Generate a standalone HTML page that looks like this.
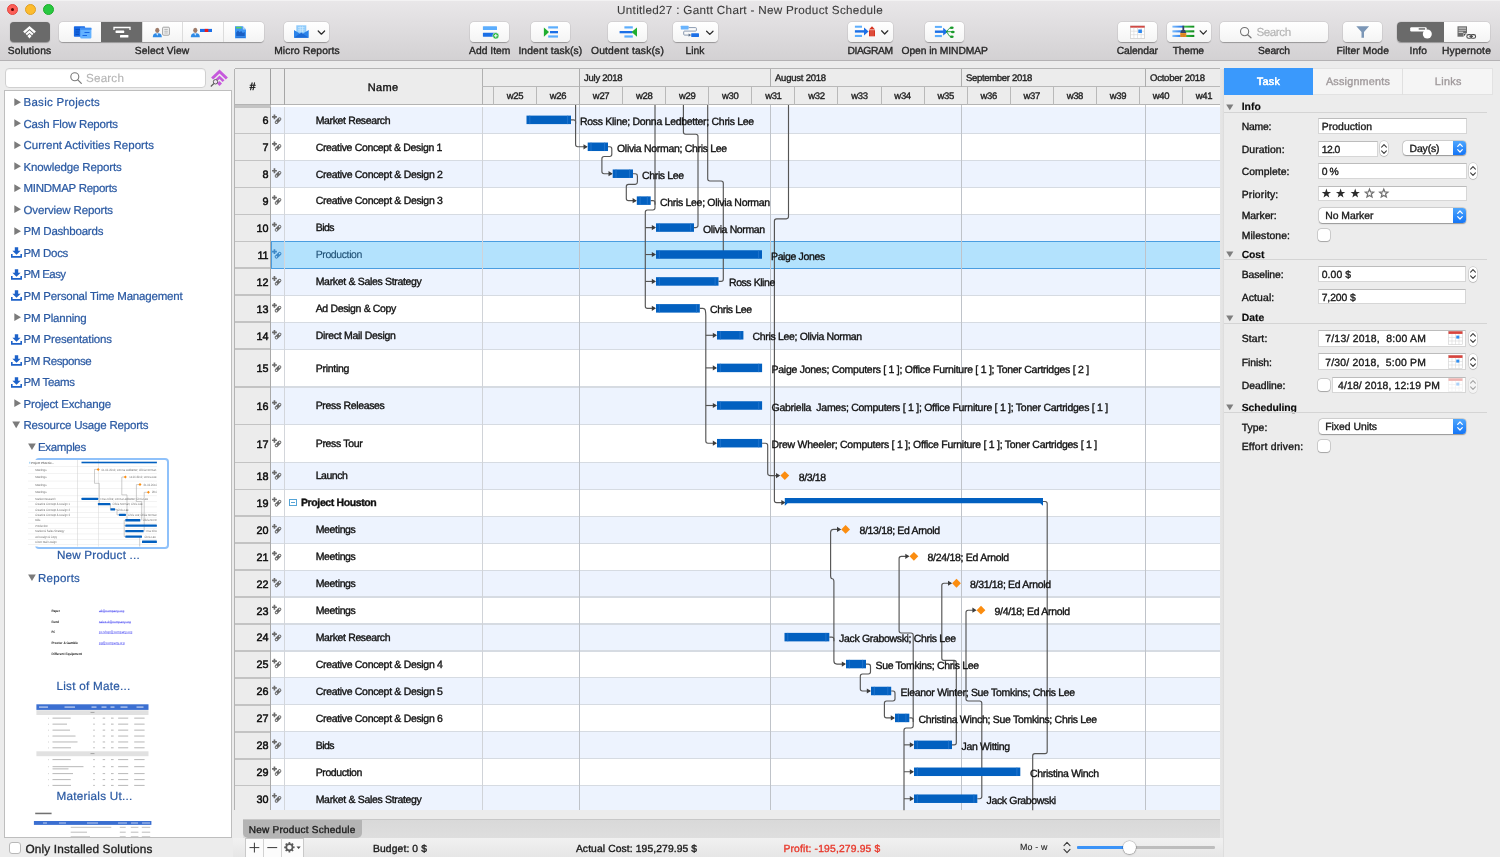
<!DOCTYPE html>
<html><head><meta charset="utf-8"><title>Gantt</title>
<style>
html,body{margin:0;padding:0;}
body{width:1500px;height:857px;overflow:hidden;position:relative;background:#ececec;font-family:"Liberation Sans",sans-serif;}
.t{position:absolute;white-space:pre;line-height:16px;}
.b{position:absolute;box-sizing:border-box;}
svg{position:absolute;overflow:visible;}
</style></head><body><div id="root" style="position:absolute;left:0;top:0;width:1500px;height:857px;will-change:transform;text-rendering:geometricPrecision;">
<div class="b" style="left:0.00px;top:0.00px;width:1500.00px;height:61.00px;background:linear-gradient(#e9e7e9,#d3d1d3);border-bottom:1px solid #b4b2b4;border-top:1px solid #f3f2f3;"></div>
<div class="b" style="left:6.90px;top:4.20px;width:11.20px;height:11.20px;border-radius:50%;background:#fd5f58;border:0.5px solid #e2463f;"></div>
<div class="b" style="left:24.80px;top:4.20px;width:11.20px;height:11.20px;border-radius:50%;background:#fdbc2e;border:0.5px solid #dfa023;"></div>
<div class="b" style="left:42.80px;top:4.20px;width:11.20px;height:11.20px;border-radius:50%;background:#28c840;border:0.5px solid #1dad2b;"></div>
<div class="b" style="left:10.90px;top:8.20px;width:3.20px;height:3.20px;border-radius:50%;background:#5a0503;"></div>
<div class="t" style="left:750.00px;width:0;display:flex;justify-content:center;top:3px;font-size:11.7px;color:#3c3c3c;letter-spacing:0.294px;-webkit-text-stroke:0.1px;"><span style="flex:none">Untitled27 : Gantt Chart - New Product Schedule</span></div>
<div class="b" style="left:9.70px;top:21.90px;width:39.90px;height:20.40px;border-radius:4px;background:#6a6a6a;box-shadow:0 0.5px 1px rgba(0,0,0,0.3);"></div>
<div class="t" style="left:29.50px;width:0;display:flex;justify-content:center;top:44px;font-size:10.3px;color:#262626;letter-spacing:0.133px;-webkit-text-stroke:0.35px;"><span style="flex:none">Solutions</span></div>
<div class="b" style="left:59.00px;top:22.20px;width:204.60px;height:19.80px;border-radius:4px;background:linear-gradient(#ffffff,#f4f4f4);box-shadow:0 0.5px 1px rgba(0,0,0,0.28),0 0 0 0.5px rgba(0,0,0,0.07);"></div>
<div class="b" style="left:101.00px;top:22.20px;width:41.00px;height:19.80px;background:#6a6a6a;"></div>
<div class="b" style="left:142.00px;top:22.20px;width:1.00px;height:19.80px;background:#dcdcdc;"></div>
<div class="b" style="left:182.30px;top:22.20px;width:1.00px;height:19.80px;background:#dcdcdc;"></div>
<div class="b" style="left:222.50px;top:22.20px;width:1.00px;height:19.80px;background:#dcdcdc;"></div>
<div class="t" style="left:162.00px;width:0;display:flex;justify-content:center;top:44px;font-size:10.3px;color:#262626;letter-spacing:0.074px;-webkit-text-stroke:0.35px;"><span style="flex:none">Select View</span></div>
<div class="b" style="left:284.40px;top:22.20px;width:44.60px;height:19.80px;border-radius:4px;background:linear-gradient(#ffffff,#f4f4f4);box-shadow:0 0.5px 1px rgba(0,0,0,0.28),0 0 0 0.5px rgba(0,0,0,0.07);"></div>
<div class="t" style="left:307.00px;width:0;display:flex;justify-content:center;top:44px;font-size:10.3px;color:#262626;letter-spacing:0.120px;-webkit-text-stroke:0.35px;"><span style="flex:none">Micro Reports</span></div>
<div class="b" style="left:470.00px;top:22.20px;width:39.00px;height:19.80px;border-radius:4px;background:linear-gradient(#ffffff,#f4f4f4);box-shadow:0 0.5px 1px rgba(0,0,0,0.28),0 0 0 0.5px rgba(0,0,0,0.07);"></div>
<div class="t" style="left:489.70px;width:0;display:flex;justify-content:center;top:44px;font-size:10.3px;color:#262626;letter-spacing:0.024px;-webkit-text-stroke:0.35px;"><span style="flex:none">Add Item</span></div>
<div class="b" style="left:531.00px;top:22.20px;width:39.40px;height:19.80px;border-radius:4px;background:linear-gradient(#ffffff,#f4f4f4);box-shadow:0 0.5px 1px rgba(0,0,0,0.28),0 0 0 0.5px rgba(0,0,0,0.07);"></div>
<div class="t" style="left:550.40px;width:0;display:flex;justify-content:center;top:44px;font-size:10.3px;color:#262626;letter-spacing:0.119px;-webkit-text-stroke:0.35px;"><span style="flex:none">Indent task(s)</span></div>
<div class="b" style="left:608.00px;top:22.20px;width:39.40px;height:19.80px;border-radius:4px;background:linear-gradient(#ffffff,#f4f4f4);box-shadow:0 0.5px 1px rgba(0,0,0,0.28),0 0 0 0.5px rgba(0,0,0,0.07);"></div>
<div class="t" style="left:627.50px;width:0;display:flex;justify-content:center;top:44px;font-size:10.3px;color:#262626;letter-spacing:0.179px;-webkit-text-stroke:0.35px;"><span style="flex:none">Outdent task(s)</span></div>
<div class="b" style="left:673.00px;top:22.20px;width:44.60px;height:19.80px;border-radius:4px;background:linear-gradient(#ffffff,#f4f4f4);box-shadow:0 0.5px 1px rgba(0,0,0,0.28),0 0 0 0.5px rgba(0,0,0,0.07);"></div>
<div class="t" style="left:695.00px;width:0;display:flex;justify-content:center;top:44px;font-size:10.3px;color:#262626;letter-spacing:-0.027px;-webkit-text-stroke:0.35px;"><span style="flex:none">Link</span></div>
<div class="b" style="left:847.90px;top:22.20px;width:44.80px;height:19.80px;border-radius:4px;background:linear-gradient(#ffffff,#f4f4f4);box-shadow:0 0.5px 1px rgba(0,0,0,0.28),0 0 0 0.5px rgba(0,0,0,0.07);"></div>
<div class="t" style="left:870.00px;width:0;display:flex;justify-content:center;top:44px;font-size:10.3px;color:#262626;letter-spacing:-0.411px;-webkit-text-stroke:0.35px;"><span style="flex:none">DIAGRAM</span></div>
<div class="b" style="left:925.20px;top:22.20px;width:38.90px;height:19.80px;border-radius:4px;background:linear-gradient(#ffffff,#f4f4f4);box-shadow:0 0.5px 1px rgba(0,0,0,0.28),0 0 0 0.5px rgba(0,0,0,0.07);"></div>
<div class="t" style="left:944.70px;width:0;display:flex;justify-content:center;top:44px;font-size:10.3px;color:#262626;letter-spacing:-0.081px;-webkit-text-stroke:0.35px;"><span style="flex:none">Open in MINDMAP</span></div>
<div class="b" style="left:1118.00px;top:22.20px;width:39.20px;height:19.80px;border-radius:4px;background:linear-gradient(#ffffff,#f4f4f4);box-shadow:0 0.5px 1px rgba(0,0,0,0.28),0 0 0 0.5px rgba(0,0,0,0.07);"></div>
<div class="t" style="left:1137.30px;width:0;display:flex;justify-content:center;top:44px;font-size:10.3px;color:#262626;letter-spacing:-0.067px;-webkit-text-stroke:0.35px;"><span style="flex:none">Calendar</span></div>
<div class="b" style="left:1166.50px;top:22.20px;width:44.30px;height:19.80px;border-radius:4px;background:linear-gradient(#ffffff,#f4f4f4);box-shadow:0 0.5px 1px rgba(0,0,0,0.28),0 0 0 0.5px rgba(0,0,0,0.07);"></div>
<div class="t" style="left:1188.30px;width:0;display:flex;justify-content:center;top:44px;font-size:10.3px;color:#262626;letter-spacing:-0.168px;-webkit-text-stroke:0.35px;"><span style="flex:none">Theme</span></div>
<div class="b" style="left:1220.00px;top:22.20px;width:107.60px;height:19.80px;border-radius:4px;background:linear-gradient(#ffffff,#f4f4f4);box-shadow:0 0.5px 1px rgba(0,0,0,0.28),0 0 0 0.5px rgba(0,0,0,0.07);"></div>
<div class="t" style="left:1274.00px;width:0;display:flex;justify-content:center;top:44px;font-size:10.3px;color:#262626;letter-spacing:-0.116px;-webkit-text-stroke:0.35px;"><span style="flex:none">Search</span></div>
<div class="t" style="left:1256.40px;top:25px;font-size:11.7px;color:#b3b3b3;letter-spacing:-0.449px;-webkit-text-stroke:0.15px;">Search</div>
<div class="b" style="left:1343.00px;top:22.20px;width:39.40px;height:19.80px;border-radius:4px;background:linear-gradient(#ffffff,#f4f4f4);box-shadow:0 0.5px 1px rgba(0,0,0,0.28),0 0 0 0.5px rgba(0,0,0,0.07);"></div>
<div class="t" style="left:1362.70px;width:0;display:flex;justify-content:center;top:44px;font-size:10.3px;color:#262626;letter-spacing:0.103px;-webkit-text-stroke:0.35px;"><span style="flex:none">Filter Mode</span></div>
<div class="b" style="left:1397.00px;top:22.20px;width:93.00px;height:19.80px;border-radius:4px;background:linear-gradient(#ffffff,#f4f4f4);box-shadow:0 0.5px 1px rgba(0,0,0,0.28),0 0 0 0.5px rgba(0,0,0,0.07);"></div>
<div class="b" style="left:1397.00px;top:22.20px;width:47.00px;height:19.80px;border-radius:4px 0 0 4px;background:#6a6a6a;"></div>
<div class="t" style="left:1418.30px;width:0;display:flex;justify-content:center;top:44px;font-size:10.3px;color:#262626;letter-spacing:0.063px;-webkit-text-stroke:0.35px;"><span style="flex:none">Info</span></div>
<div class="t" style="left:1466.50px;width:0;display:flex;justify-content:center;top:44px;font-size:10.3px;color:#262626;letter-spacing:0.174px;-webkit-text-stroke:0.35px;"><span style="flex:none">Hypernote</span></div>
<svg style="left:0;top:0" width="1500" height="62" viewBox="0 0 1500 62"><g fill="#fff"><path d="M29.5 26 L35.9 31.6 L34.2 33.2 L29.5 29.1 L24.8 33.2 L23.1 31.6 Z"/><path d="M29.5 30.2 L33.5 33.8 L32.1 35.2 L29.5 32.9 L26.9 35.2 L25.5 33.8 Z"/><path d="M29.5 34 L31.6 36.1 L29.5 38.4 L27.4 36.1 Z"/></g><rect x="73.9" y="26.2" width="11.2" height="10.5" rx="0.8" fill="#1667e3"/><path d="M75.5 29.6 H80 M75.5 32 H79 M75.5 34.4 H79" stroke="#0b4fc0" stroke-width="1.1"/><rect x="80.2" y="27.8" width="11.2" height="10.6" rx="0.8" fill="#62b1ff"/><rect x="80.2" y="27.8" width="11.2" height="2" fill="#3f8df2"/><path d="M84.5 32.5 H89.5 M82.5 35.5 H87" stroke="#1667e3" stroke-width="1.2"/><path d="M114 30 V27.5 H130 V30" fill="none" stroke="#fff" stroke-width="1.3"/><rect x="115.6" y="30.6" width="8.6" height="2.5" rx="0.6" fill="#fff"/><rect x="120" y="34.9" width="8.4" height="2.7" rx="0.6" fill="#fff"/><ellipse cx="157.3" cy="30.3" rx="2.1" ry="2.6" fill="#9d7b6a"/><path d="M152.8 37.3 C152.8 33.6 155.3 33 157.3 33 C159.3 33 161.8 33.6 161.8 37.3 Z" fill="#2e8ae6"/><path d="M156.0 33.2 L157.3 35.8 L158.6 33.2 Z" fill="#d7e9fb"/><rect x="162.6" y="27.2" width="6.8" height="8" rx="1" fill="#f3f3f3" stroke="#8d8d8d" stroke-width="0.8"/><path d="M164.3 29.4 H167.8 M164.3 31.2 H167.8 M164.3 33 H167.8" stroke="#9a9a9a" stroke-width="0.7"/><ellipse cx="195.3" cy="30.3" rx="2.1" ry="2.6" fill="#9d7b6a"/><path d="M190.8 37.3 C190.8 33.6 193.3 33 195.3 33 C197.3 33 199.8 33.6 199.8 37.3 Z" fill="#2e8ae6"/><path d="M194.0 33.2 L195.3 35.8 L196.6 33.2 Z" fill="#d7e9fb"/><rect x="200" y="28.9" width="12" height="3.1" fill="#1b6fe8"/><rect x="204.7" y="28.9" width="3.6" height="3.1" fill="#f01818"/><path d="M235 26.3 H242.8 L246 29.5 V38.3 H235 Z" fill="#3d95f5"/><path d="M242.8 26.3 V29.5 H246 Z" fill="#a9d2fb"/><rect x="236" y="26.8" width="5.6" height="1.7" fill="#5fd05a"/><path d="M236.2 36 V32.5 L238 30.5 L239.5 32.2 L241.2 31 L242.8 33 L244.8 32 V36 Z" fill="#1a5fc4"/><path d="M236 37.2 H245" stroke="#1a5fc4" stroke-width="0.7"/><rect x="296.3" y="25.3" width="10" height="8" fill="#8fcbfb"/><path d="M298 27.5 H304.6 M298 29.3 H304.6 M298 31 H304.6 M300.2 26.3 V32 M302.5 26.3 V32" stroke="#d4ecfd" stroke-width="0.6"/><path d="M294 30 L301.3 34.6 L308.7 30 V37.7 H294 Z" fill="#2a83ea"/><path d="M294 37.7 L301.3 32.6 L308.7 37.7 Z" fill="#1b6ad6"/><path d="M318.2 31.0 L321.4 34.2 L324.6 31.0" fill="none" stroke="#2c2c2c" stroke-width="1.25" stroke-linecap="round" stroke-linejoin="round"/><rect x="482.9" y="26.3" width="14.1" height="3.8" rx="0.4" fill="#5badfd"/><rect x="482.9" y="32.7" width="14.1" height="4" rx="0.4" fill="#1b6fe6"/><circle cx="495.8" cy="35.8" r="3.1" fill="#25b43a" stroke="#fff" stroke-width="0.5"/><path d="M494 35.8 H497.6 M495.8 34 V37.6" stroke="#fff" stroke-width="1"/><path d="M543.9 27.4 L549 32.1 L543.9 36.8 Z" fill="#1fae2f"/><rect x="548.2" y="26.3" width="9.8" height="2.2" fill="#5badfd"/><rect x="550" y="31" width="8" height="2.3" fill="#1b6fe6"/><rect x="548.2" y="35.4" width="9.8" height="2.2" fill="#5badfd"/><rect x="624.4" y="26.3" width="8.4" height="2.2" fill="#5badfd"/><rect x="619.6" y="31" width="13" height="2.3" fill="#1b6fe6"/><rect x="624.4" y="35.4" width="8.4" height="2.2" fill="#5badfd"/><path d="M637 27.4 L631.6 32.1 L637 36.8 Z" fill="#1fae2f"/><rect x="680.8" y="25.8" width="7.8" height="3.6" rx="0.4" fill="#6ab4fd"/><rect x="691.2" y="33.3" width="7.8" height="3.6" rx="0.4" fill="#1b6fe6"/><path d="M688.6 27.6 H695.5 Q696.4 27.6 696.4 28.5 V30.2 Q696.4 31.1 695.5 31.1 H684.6 Q683.7 31.1 683.7 32 V34.2 Q683.7 35.1 684.6 35.1 H689" fill="none" stroke="#7e8fa8" stroke-width="0.9"/><path d="M691.2 35.1 L688.6 33.5 V36.7 Z" fill="#5f7088"/><path d="M706.6 31.2 L709.8 34.4 L713.0 31.2" fill="none" stroke="#2c2c2c" stroke-width="1.25" stroke-linecap="round" stroke-linejoin="round"/><rect x="854.9" y="25.7" width="7.1" height="2" fill="#5badfd"/><rect x="854.9" y="34.9" width="7.1" height="2.1" fill="#5badfd"/><rect x="854.9" y="30.2" width="9.8" height="2.4" fill="#1b6fe6"/><path d="M864 27.4 L868.6 31.4 L864 35.4 Z" fill="#1b6fe6"/><path d="M872 26.3 L875 29.6 H869 Z" fill="#d6321f"/><rect x="869" y="30.2" width="6" height="6.1" fill="#d6321f"/><path d="M871 30.5 V36 M873 30.5 V36" stroke="#f08a7c" stroke-width="0.6"/><path d="M881.6 30.8 L884.7 34.0 L887.8 30.8" fill="none" stroke="#2c2c2c" stroke-width="1.25" stroke-linecap="round" stroke-linejoin="round"/><rect x="934.9" y="25.9" width="7" height="2" fill="#5badfd"/><rect x="934.9" y="35" width="7" height="2.1" fill="#5badfd"/><rect x="934.9" y="30.5" width="9" height="2.4" fill="#1b6fe6"/><path d="M943.2 27.8 L947.9 31.7 L943.2 35.6 Z" fill="#1b6fe6"/><path d="M946 31.7 C948 31.7 948 27.8 951 27.8 M946 31.7 H952 M946 31.7 C948 31.7 948 36.6 951 36.6" fill="none" stroke="#1a9a2c" stroke-width="0.9"/><ellipse cx="951.8" cy="27.7" rx="1.9" ry="1.2" fill="#1a9a2c"/><ellipse cx="952.8" cy="32" rx="1.9" ry="1.3" fill="#1a9a2c"/><ellipse cx="951.8" cy="36.7" rx="1.9" ry="1.2" fill="#1a9a2c"/><rect x="1130.3" y="26" width="14.4" height="12.3" fill="#fff" stroke="#c4c4c4" stroke-width="0.6"/><rect x="1130.3" y="25.8" width="14.4" height="1.9" fill="#d04a45"/><path d="M1133.9 27.7 V38.3 M1137.5 27.7 V38.3 M1141.1 27.7 V38.3 M1130.3 31.2 H1144.7 M1130.3 34.7 H1144.7" stroke="#d5d5d5" stroke-width="0.6"/><rect x="1138.3" y="29.5" width="3.6" height="3.5" fill="#2a86ee"/><rect x="1172.4" y="25.7" width="11" height="1.9" fill="url(#gb)"/><rect x="1183.4" y="25.7" width="10.9" height="1.9" fill="url(#gg)"/><rect x="1172.4" y="30.3" width="11" height="2.1" fill="url(#gb)"/><rect x="1183.4" y="30.3" width="10.9" height="2.1" fill="url(#gg)"/><rect x="1172.4" y="34.9" width="11" height="2.1" fill="url(#gb)"/><rect x="1183.4" y="34.9" width="10.9" height="2.1" fill="url(#gg)"/><defs><linearGradient id="gb"><stop offset="0" stop-color="#7cbcfd"/><stop offset="1" stop-color="#1b6fe6"/></linearGradient><linearGradient id="gg"><stop offset="0" stop-color="#3fc84a"/><stop offset="1" stop-color="#108a1e"/></linearGradient></defs><rect x="1182.4" y="25.7" width="1.8" height="4.4" fill="#35466a"/><path d="M1181.6 30 H1185 L1186.3 33 H1180.2 Z" fill="#35466a"/><rect x="1180.2" y="33" width="6.1" height="4" fill="#e8922a"/><path d="M1181.8 34 V37 M1183.3 34 V37 M1184.8 34 V37" stroke="#c27012" stroke-width="0.5"/><path d="M1200.2 30.8 L1203.3 34.2 L1206.4 30.8" fill="none" stroke="#2c2c2c" stroke-width="1.25" stroke-linecap="round" stroke-linejoin="round"/><circle cx="1244.6" cy="31.6" r="4.1" fill="none" stroke="#747474" stroke-width="1.1"/><path d="M1247.7 34.7 L1251 37.8" stroke="#747474" stroke-width="1.2" stroke-linecap="round"/><path d="M1356.3 26.3 H1369.1 L1364 32 V37.7 H1361.5 V32 Z" fill="#7b96b6"/><rect x="1410.2" y="27.2" width="16.5" height="4.3" rx="1.2" fill="#fff"/><rect x="1418.7" y="28.3" width="6.4" height="1.3" fill="#555"/><circle cx="1427.3" cy="34" r="4.5" fill="#fff"/><rect x="1457.5" y="26.3" width="9.5" height="10.4" fill="#6b6b6b"/><path d="M1458.6 28.1 H1466 M1458.6 30.2 H1466 M1458.6 32.3 H1463.2" stroke="#c9c9c9" stroke-width="1.15"/><rect x="1463.6" y="33" width="4.4" height="4.6" fill="#f6f6f6"/><path d="M1464.5 35.6 V33.9 H1466.4" fill="none" stroke="#4a4a4a" stroke-width="1"/><rect x="1466.8" y="34.6" width="4.8" height="3.6" rx="1.8" fill="none" stroke="#4a4a4a" stroke-width="1.05"/><rect x="1470.8" y="34.6" width="4.8" height="3.6" rx="1.8" fill="none" stroke="#4a4a4a" stroke-width="1.05"/><path d="M1469.4 36.4 H1473" stroke="#4a4a4a" stroke-width="1.05"/></svg>
<div class="b" style="left:5.10px;top:68.10px;width:200.60px;height:19.60px;background:#fff;border:1px solid #d0d0d0;border-radius:4px;box-shadow:inset 0 1px 1px rgba(0,0,0,0.05);"></div>
<svg style="left:69px;top:71px" width="14" height="14" viewBox="0 0 14 14"><circle cx="5.8" cy="5.8" r="4" fill="none" stroke="#7a7a7a" stroke-width="1.1"/><path d="M8.8 8.8 L12.3 12.3" stroke="#7a7a7a" stroke-width="1.2" stroke-linecap="round"/></svg>
<div class="t" style="left:86.00px;top:71px;font-size:11.7px;color:#b5b5b5;letter-spacing:0.169px;-webkit-text-stroke:0.15px;">Search</div>
<svg style="left:0;top:0" width="240" height="100"><g transform="translate(219.5 69.6)" fill="#c659dc"><path d="M0 0 L8.4 7.9 L6.3 9.9 L0 4 L-6.3 9.9 L-8.4 7.9 Z"/><path d="M0 5.8 L5 10.6 L3.1 12.5 L0 9.5 L-3.1 12.5 L-5 10.6 Z"/><path d="M0 11.4 L2.5 13.8 L0 16.3 L-2.5 13.8 Z"/></g><circle cx="215.5" cy="81.8" r="2.2" fill="#efe3f3" stroke="#585858" stroke-width="0.95"/><path d="M213.9 83.5 L210.8 86.5" stroke="#585858" stroke-width="1.1"/></svg>
<div class="b" style="left:4.00px;top:89.60px;width:228.40px;height:748.00px;background:#fff;border:1.6px solid #bebebe;border-bottom-width:1px;border-right-width:1.2px;"></div>
<div class="t" style="left:23.50px;top:95px;font-size:11.5px;color:#2b5aa3;letter-spacing:0.270px;-webkit-text-stroke:0.22px;">Basic Projects</div>
<svg style="left:13.6px;top:97.60px" width="8" height="9" viewBox="0 0 8 9"><path d="M0.3 0.3 L7 4.2 L0.3 8.1 Z" fill="#7b7b7b"/></svg>
<div class="t" style="left:23.50px;top:117px;font-size:11.5px;color:#2b5aa3;letter-spacing:-0.199px;-webkit-text-stroke:0.22px;">Cash Flow Reports</div>
<svg style="left:13.6px;top:119.12px" width="8" height="9" viewBox="0 0 8 9"><path d="M0.3 0.3 L7 4.2 L0.3 8.1 Z" fill="#7b7b7b"/></svg>
<div class="t" style="left:23.50px;top:138px;font-size:11.5px;color:#2b5aa3;letter-spacing:0.026px;-webkit-text-stroke:0.22px;">Current Activities Reports</div>
<svg style="left:13.6px;top:140.64px" width="8" height="9" viewBox="0 0 8 9"><path d="M0.3 0.3 L7 4.2 L0.3 8.1 Z" fill="#7b7b7b"/></svg>
<div class="t" style="left:23.50px;top:160px;font-size:11.5px;color:#2b5aa3;letter-spacing:-0.125px;-webkit-text-stroke:0.22px;">Knowledge Reports</div>
<svg style="left:13.6px;top:162.16px" width="8" height="9" viewBox="0 0 8 9"><path d="M0.3 0.3 L7 4.2 L0.3 8.1 Z" fill="#7b7b7b"/></svg>
<div class="t" style="left:23.50px;top:181px;font-size:11.5px;color:#2b5aa3;letter-spacing:-0.266px;-webkit-text-stroke:0.22px;">MINDMAP Reports</div>
<svg style="left:13.6px;top:183.68px" width="8" height="9" viewBox="0 0 8 9"><path d="M0.3 0.3 L7 4.2 L0.3 8.1 Z" fill="#7b7b7b"/></svg>
<div class="t" style="left:23.50px;top:203px;font-size:11.5px;color:#2b5aa3;letter-spacing:-0.122px;-webkit-text-stroke:0.22px;">Overview Reports</div>
<svg style="left:13.6px;top:205.20px" width="8" height="9" viewBox="0 0 8 9"><path d="M0.3 0.3 L7 4.2 L0.3 8.1 Z" fill="#7b7b7b"/></svg>
<div class="t" style="left:23.50px;top:224px;font-size:11.5px;color:#2b5aa3;letter-spacing:-0.212px;-webkit-text-stroke:0.22px;">PM Dashboards</div>
<svg style="left:13.6px;top:226.72px" width="8" height="9" viewBox="0 0 8 9"><path d="M0.3 0.3 L7 4.2 L0.3 8.1 Z" fill="#7b7b7b"/></svg>
<div class="t" style="left:23.50px;top:246px;font-size:11.5px;color:#2b5aa3;letter-spacing:-0.299px;-webkit-text-stroke:0.22px;">PM Docs</div>
<svg style="left:10.5px;top:247.44px" width="11" height="11" viewBox="0 0 11 11"><path d="M3.8 0.3 H7.2 V3.8 H9.6 L5.5 7.7 L1.4 3.8 H3.8 Z" fill="#1d62c9"/><path d="M0.8 6.9 V9.9 H10.2 V6.9" fill="none" stroke="#1d62c9" stroke-width="1.6"/></svg>
<div class="t" style="left:23.50px;top:267px;font-size:11.5px;color:#2b5aa3;letter-spacing:-0.571px;-webkit-text-stroke:0.22px;">PM Easy</div>
<svg style="left:10.5px;top:268.96px" width="11" height="11" viewBox="0 0 11 11"><path d="M3.8 0.3 H7.2 V3.8 H9.6 L5.5 7.7 L1.4 3.8 H3.8 Z" fill="#1d62c9"/><path d="M0.8 6.9 V9.9 H10.2 V6.9" fill="none" stroke="#1d62c9" stroke-width="1.6"/></svg>
<div class="t" style="left:23.50px;top:289px;font-size:11.5px;color:#2b5aa3;letter-spacing:-0.199px;-webkit-text-stroke:0.22px;">PM Personal Time Management</div>
<svg style="left:10.5px;top:290.48px" width="11" height="11" viewBox="0 0 11 11"><path d="M3.8 0.3 H7.2 V3.8 H9.6 L5.5 7.7 L1.4 3.8 H3.8 Z" fill="#1d62c9"/><path d="M0.8 6.9 V9.9 H10.2 V6.9" fill="none" stroke="#1d62c9" stroke-width="1.6"/></svg>
<div class="t" style="left:23.50px;top:311px;font-size:11.5px;color:#2b5aa3;letter-spacing:-0.210px;-webkit-text-stroke:0.22px;">PM Planning</div>
<svg style="left:13.6px;top:312.80px" width="8" height="9" viewBox="0 0 8 9"><path d="M0.3 0.3 L7 4.2 L0.3 8.1 Z" fill="#7b7b7b"/></svg>
<div class="t" style="left:23.50px;top:332px;font-size:11.5px;color:#2b5aa3;letter-spacing:-0.146px;-webkit-text-stroke:0.22px;">PM Presentations</div>
<svg style="left:10.5px;top:333.52px" width="11" height="11" viewBox="0 0 11 11"><path d="M3.8 0.3 H7.2 V3.8 H9.6 L5.5 7.7 L1.4 3.8 H3.8 Z" fill="#1d62c9"/><path d="M0.8 6.9 V9.9 H10.2 V6.9" fill="none" stroke="#1d62c9" stroke-width="1.6"/></svg>
<div class="t" style="left:23.50px;top:354px;font-size:11.5px;color:#2b5aa3;letter-spacing:-0.403px;-webkit-text-stroke:0.22px;">PM Response</div>
<svg style="left:10.5px;top:355.04px" width="11" height="11" viewBox="0 0 11 11"><path d="M3.8 0.3 H7.2 V3.8 H9.6 L5.5 7.7 L1.4 3.8 H3.8 Z" fill="#1d62c9"/><path d="M0.8 6.9 V9.9 H10.2 V6.9" fill="none" stroke="#1d62c9" stroke-width="1.6"/></svg>
<div class="t" style="left:23.50px;top:375px;font-size:11.5px;color:#2b5aa3;letter-spacing:-0.388px;-webkit-text-stroke:0.22px;">PM Teams</div>
<svg style="left:10.5px;top:376.56px" width="11" height="11" viewBox="0 0 11 11"><path d="M3.8 0.3 H7.2 V3.8 H9.6 L5.5 7.7 L1.4 3.8 H3.8 Z" fill="#1d62c9"/><path d="M0.8 6.9 V9.9 H10.2 V6.9" fill="none" stroke="#1d62c9" stroke-width="1.6"/></svg>
<div class="t" style="left:23.50px;top:397px;font-size:11.5px;color:#2b5aa3;letter-spacing:-0.164px;-webkit-text-stroke:0.22px;">Project Exchange</div>
<svg style="left:13.6px;top:398.88px" width="8" height="9" viewBox="0 0 8 9"><path d="M0.3 0.3 L7 4.2 L0.3 8.1 Z" fill="#7b7b7b"/></svg>
<div class="t" style="left:23.50px;top:418px;font-size:11.5px;color:#2b5aa3;letter-spacing:-0.191px;-webkit-text-stroke:0.22px;">Resource Usage Reports</div>
<svg style="left:12.4px;top:421.40px" width="9" height="8" viewBox="0 0 9 8"><path d="M0.3 0.6 L8.1 0.6 L4.2 7.3 Z" fill="#7b7b7b"/></svg>
<svg style="left:27.5px;top:443px" width="9" height="8" viewBox="0 0 9 8"><path d="M0.1 0.4 L7.8 0.4 L3.95 7 Z" fill="#7b7b7b"/></svg>
<div class="t" style="left:38.00px;top:440px;font-size:11.5px;color:#2b5aa3;letter-spacing:-0.332px;-webkit-text-stroke:0.22px;">Examples</div>
<div class="b" style="left:35.00px;top:457.80px;width:134.20px;height:91.20px;border:2px solid #8fc1fa;border-radius:4px;background:#fff;"></div>
<div class="t" style="left:98.40px;width:0;display:flex;justify-content:center;top:548px;font-size:11.7px;color:#2b5aa3;letter-spacing:0.208px;-webkit-text-stroke:0.22px;"><span style="flex:none">New Product ...</span></div>
<svg style="left:27.5px;top:574.3px" width="9" height="8" viewBox="0 0 9 8"><path d="M0.1 0.4 L7.8 0.4 L3.95 7 Z" fill="#7b7b7b"/></svg>
<div class="t" style="left:38.00px;top:571px;font-size:11.5px;color:#2b5aa3;letter-spacing:0.267px;-webkit-text-stroke:0.22px;">Reports</div>
<div class="t" style="left:93.50px;width:0;display:flex;justify-content:center;top:679px;font-size:11.7px;color:#2b5aa3;letter-spacing:0.260px;-webkit-text-stroke:0.22px;"><span style="flex:none">List of Mate...</span></div>
<div class="t" style="left:94.50px;width:0;display:flex;justify-content:center;top:789px;font-size:11.7px;color:#2b5aa3;letter-spacing:0.264px;-webkit-text-stroke:0.22px;"><span style="flex:none">Materials Ut...</span></div>
<svg style="left:0;top:0" width="240" height="857" viewBox="0 0 240 857" font-family="Liberation Sans, sans-serif"><defs><filter id="bl" x="-5%" y="-50%" width="110%" height="200%"><feGaussianBlur stdDeviation="0.35"/></filter><clipPath id="sbclip"><rect x="5.7" y="91" width="225.6" height="746"/></clipPath></defs><g clip-path="url(#sbclip)"><rect x="28" y="460" width="128.9" height="86.5" fill="#fff"/><rect x="28" y="466.0" width="128.9" height="0.5" fill="#e6e6e6"/><rect x="28" y="473.2" width="128.9" height="0.5" fill="#e6e6e6"/><rect x="28" y="480.8" width="128.9" height="0.5" fill="#e6e6e6"/><rect x="28" y="488.4" width="128.9" height="0.5" fill="#e6e6e6"/><rect x="28" y="495.6" width="128.9" height="0.5" fill="#e6e6e6"/><rect x="28" y="501.4" width="128.9" height="0.5" fill="#e6e6e6"/><rect x="28" y="506.7" width="128.9" height="0.5" fill="#e6e6e6"/><rect x="28" y="512.1" width="128.9" height="0.5" fill="#e6e6e6"/><rect x="28" y="517.5" width="128.9" height="0.5" fill="#e6e6e6"/><rect x="28" y="522.9" width="128.9" height="0.5" fill="#e6e6e6"/><rect x="28" y="528.3" width="128.9" height="0.5" fill="#e6e6e6"/><rect x="28" y="533.7" width="128.9" height="0.5" fill="#e6e6e6"/><rect x="28" y="539.1" width="128.9" height="0.5" fill="#e6e6e6"/><rect x="28" y="544.5" width="128.9" height="0.5" fill="#e6e6e6"/><rect x="77.2" y="460" width="0.5" height="86.5" fill="#cfcfcf"/><rect x="98" y="460" width="0.5" height="86.5" fill="#d6d6d6"/><g fill="none" stroke="#9a9a9a" stroke-width="0.5"><path d="M97 469.4 H94.5 V483.3 H99.3 V504 "/><path d="M124 477 H121.8 V494.9 H127 V520.4"/><path d="M139 484.6 H136.4 V501.6 H141.7 V520.4"/><path d="M147 492.3 H144.2 V531.5"/><path d="M125.3 520.4 H124.2 V536.5 H125.3 M124.2 525.6 H125.3 M124.2 531 H125.3"/><path d="M142 536.5 H139.7 V546.5"/><path d="M110.4 504 V509.4 M115.1 509.4 H117 V514.9 H118.9"/></g><text x="31.1" y="463.9" font-size="3.1" textLength="22.7" lengthAdjust="spacingAndGlyphs" fill="#333" opacity="0.7" font-weight="bold">Project Phoenix...</text><text x="35.2" y="470.5" font-size="3.1" textLength="11.4" lengthAdjust="spacingAndGlyphs" fill="#333" opacity="0.7" >Meetings</text><text x="35.2" y="478.1" font-size="3.1" textLength="11.4" lengthAdjust="spacingAndGlyphs" fill="#333" opacity="0.7" >Meetings</text><text x="35.2" y="485.7" font-size="3.1" textLength="11.4" lengthAdjust="spacingAndGlyphs" fill="#333" opacity="0.7" >Meetings</text><text x="35.2" y="493.4" font-size="3.1" textLength="11.4" lengthAdjust="spacingAndGlyphs" fill="#333" opacity="0.7" >Meetings</text><text x="35.2" y="499.9" font-size="3.1" textLength="20.5" lengthAdjust="spacingAndGlyphs" fill="#333" opacity="0.7" >Market Research</text><text x="35.2" y="505.1" font-size="3.1" textLength="34.7" lengthAdjust="spacingAndGlyphs" fill="#333" opacity="0.7" >Creative Concept &amp; Design 1</text><text x="35.2" y="510.5" font-size="3.1" textLength="34.7" lengthAdjust="spacingAndGlyphs" fill="#333" opacity="0.7" >Creative Concept &amp; Design 2</text><text x="35.2" y="516.0" font-size="3.1" textLength="34.7" lengthAdjust="spacingAndGlyphs" fill="#333" opacity="0.7" >Creative Concept &amp; Design 3</text><text x="35.2" y="521.3" font-size="3.1" textLength="5.3" lengthAdjust="spacingAndGlyphs" fill="#333" opacity="0.7" >Bids</text><text x="35.2" y="526.7" font-size="3.1" textLength="12.8" lengthAdjust="spacingAndGlyphs" fill="#333" opacity="0.7" >Production</text><text x="35.2" y="532.1" font-size="3.1" textLength="29.1" lengthAdjust="spacingAndGlyphs" fill="#333" opacity="0.7" >Market &amp; Sales Strategy</text><text x="35.2" y="537.6" font-size="3.1" textLength="21.9" lengthAdjust="spacingAndGlyphs" fill="#333" opacity="0.7" >Ad Design &amp; Copy</text><text x="35.2" y="542.9" font-size="3.1" textLength="21.6" lengthAdjust="spacingAndGlyphs" fill="#333" opacity="0.7" >Direct Mail Design</text><text x="101.5" y="470.5" font-size="3.1" textLength="54.9" lengthAdjust="spacingAndGlyphs" fill="#333" opacity="0.7" >01.06.2016; Donna Ledbetter; Olivia Norman</text><text x="129.2" y="478.1" font-size="3.1" textLength="27.2" lengthAdjust="spacingAndGlyphs" fill="#333" opacity="0.7" >14.06.2016; Donna Lee</text><text x="143.6" y="485.7" font-size="3.1" textLength="13.3" lengthAdjust="spacingAndGlyphs" fill="#333" opacity="0.7" >21.06.2016</text><text x="151.9" y="493.4" font-size="3.1" textLength="5.0" lengthAdjust="spacingAndGlyphs" fill="#333" opacity="0.7" >28.0</text><text x="100.4" y="499.9" font-size="3.1" textLength="47.6" lengthAdjust="spacingAndGlyphs" fill="#333" opacity="0.7" >Ross Kline; Donna Ledbetter; Chris Lee</text><text x="112.6" y="505.1" font-size="3.1" textLength="29.9" lengthAdjust="spacingAndGlyphs" fill="#333" opacity="0.7" >Olivia Norman; Chris Lee</text><text x="117.3" y="510.5" font-size="3.1" textLength="11.3" lengthAdjust="spacingAndGlyphs" fill="#333" opacity="0.7" >Chris Lee</text><text x="128.1" y="516.0" font-size="3.1" textLength="28.8" lengthAdjust="spacingAndGlyphs" fill="#333" opacity="0.7" >Chris Lee; Olivia Norman</text><text x="142.8" y="521.3" font-size="3.1" textLength="14.1" lengthAdjust="spacingAndGlyphs" fill="#333" opacity="0.7" >Olivia Norm</text><text x="145.8" y="532.1" font-size="3.1" textLength="11.1" lengthAdjust="spacingAndGlyphs" fill="#333" opacity="0.7" >Ross Kline</text><text x="144.4" y="537.6" font-size="3.1" textLength="11.4" lengthAdjust="spacingAndGlyphs" fill="#333" opacity="0.7" >Chris Lee</text><rect x="81.5" y="497.7" width="16.7" height="2.3" rx="0.5" fill="#0260c0"/><rect x="97.9" y="502.9" width="12.5" height="2.3" rx="0.5" fill="#0260c0"/><rect x="110.4" y="508.2" width="4.7" height="2.3" rx="0.5" fill="#0260c0"/><rect x="118.9" y="513.8" width="7.0" height="2.3" rx="0.5" fill="#0260c0"/><rect x="125.3" y="519.1" width="15.0" height="2.3" rx="0.5" fill="#0260c0"/><rect x="125.3" y="524.5" width="31.6" height="2.3" rx="0.5" fill="#0260c0"/><rect x="125.3" y="529.9" width="18.3" height="2.3" rx="0.5" fill="#0260c0"/><rect x="125.3" y="535.4" width="16.7" height="2.3" rx="0.5" fill="#0260c0"/><rect x="142.0" y="540.6" width="14.9" height="2.3" rx="0.5" fill="#0260c0"/><rect x="81.5" y="461.7" width="75.4" height="1.6" fill="#0260c0"/><path d="M98.2 467.9 l1.5 1.5 l-1.5 1.5 l-1.5 -1.5 Z" fill="#fb8d10"/><path d="M125.3 475.5 l1.5 1.5 l-1.5 1.5 l-1.5 -1.5 Z" fill="#fb8d10"/><path d="M140.0 483.1 l1.5 1.5 l-1.5 1.5 l-1.5 -1.5 Z" fill="#fb8d10"/><path d="M148.4 490.8 l1.5 1.5 l-1.5 1.5 l-1.5 -1.5 Z" fill="#fb8d10"/><rect x="29" y="461.8" width="1.4" height="1.8" fill="#a8d4f5"/><text x="51.5" y="611.5" font-size="3.4" textLength="8.5" lengthAdjust="spacingAndGlyphs" fill="#000" opacity="0.95" font-weight="bold">Paper</text><text x="98.9" y="611.5" font-size="3.4" textLength="25.4" lengthAdjust="spacingAndGlyphs" fill="#2a2af0" opacity="0.9" >ali@company.org</text><rect x="98.9" y="611.7" width="25.4" height="0.4" fill="#2a2af0" opacity="0.8"/><text x="51.5" y="622.5" font-size="3.4" textLength="7.4" lengthAdjust="spacingAndGlyphs" fill="#000" opacity="0.95" font-weight="bold">Fund</text><text x="98.9" y="622.5" font-size="3.4" textLength="32.0" lengthAdjust="spacingAndGlyphs" fill="#2a2af0" opacity="0.9" >sales.d@company.org</text><rect x="98.9" y="622.7" width="32.0" height="0.4" fill="#2a2af0" opacity="0.8"/><text x="51.5" y="633.4" font-size="3.4" textLength="3.7" lengthAdjust="spacingAndGlyphs" fill="#000" opacity="0.95" font-weight="bold">PC</text><text x="98.9" y="633.4" font-size="3.4" textLength="33.4" lengthAdjust="spacingAndGlyphs" fill="#2a2af0" opacity="0.9" >pc.shop@company.org</text><rect x="98.9" y="633.6" width="33.4" height="0.4" fill="#2a2af0" opacity="0.8"/><text x="51.5" y="644.2" font-size="3.4" textLength="26.6" lengthAdjust="spacingAndGlyphs" fill="#000" opacity="0.95" font-weight="bold">Procter &amp; Gamble</text><text x="98.9" y="644.2" font-size="3.4" textLength="25.6" lengthAdjust="spacingAndGlyphs" fill="#2a2af0" opacity="0.9" >pg@company.org</text><rect x="98.9" y="644.4" width="25.6" height="0.4" fill="#2a2af0" opacity="0.8"/><text x="51.5" y="655.2" font-size="3.4" textLength="30.4" lengthAdjust="spacingAndGlyphs" fill="#000" opacity="0.95" font-weight="bold">Different Equipment</text><rect x="36.4" y="704.3" width="112.1" height="5.6" fill="#3b6fd1"/><rect x="36.4" y="710.2" width="112.1" height="4.8" fill="#e1e1e1"/><rect x="36.4" y="751.3" width="112.1" height="4.9" fill="#e1e1e1"/><g filter="url(#bl)"><rect x="39.0" y="706.4" width="9.0" height="1.4" fill="#fff" opacity="0.6"/><rect x="64.5" y="706.4" width="10.5" height="1.4" fill="#fff" opacity="0.6"/><rect x="91.5" y="706.4" width="5.0" height="1.4" fill="#fff" opacity="0.6"/><rect x="101.5" y="706.4" width="5.0" height="1.4" fill="#fff" opacity="0.6"/><rect x="110.5" y="706.4" width="4.0" height="1.4" fill="#fff" opacity="0.6"/><rect x="120.5" y="706.4" width="7.0" height="1.4" fill="#fff" opacity="0.6"/><rect x="136.5" y="706.4" width="7.0" height="1.4" fill="#fff" opacity="0.6"/><rect x="90.5" y="711.9" width="4" height="1.1" fill="#555" opacity="0.4"/><rect x="90.5" y="753" width="4" height="1.1" fill="#555" opacity="0.4"/><rect x="48" y="717.7" width="1" height="1.2" fill="#888" opacity="0.3"/><rect x="52.5" y="717.6" width="18.2" height="1.1" fill="#555" opacity="0.38"/><rect x="93.2" y="717.6" width="1.6" height="1.1" fill="#555" opacity="0.38"/><rect x="102.7" y="717.6" width="2.4" height="1.1" fill="#555" opacity="0.38"/><rect x="111.0" y="717.6" width="2.6" height="1.1" fill="#555" opacity="0.38"/><rect x="118.1" y="717.6" width="10.1" height="1.1" fill="#555" opacity="0.38"/><rect x="134.2" y="717.6" width="10.4" height="1.1" fill="#555" opacity="0.38"/><rect x="48" y="723.7" width="1" height="1.2" fill="#888" opacity="0.3"/><rect x="52.5" y="723.6" width="14.5" height="1.1" fill="#555" opacity="0.38"/><rect x="93.2" y="723.6" width="1.6" height="1.1" fill="#555" opacity="0.38"/><rect x="102.7" y="723.6" width="2.4" height="1.1" fill="#555" opacity="0.38"/><rect x="111.0" y="723.6" width="2.6" height="1.1" fill="#555" opacity="0.38"/><rect x="118.1" y="723.6" width="10.1" height="1.1" fill="#555" opacity="0.38"/><rect x="134.2" y="723.6" width="10.4" height="1.1" fill="#555" opacity="0.38"/><rect x="48" y="729.6" width="1" height="1.2" fill="#888" opacity="0.3"/><rect x="52.5" y="729.6" width="17.5" height="1.1" fill="#555" opacity="0.38"/><rect x="93.2" y="729.6" width="1.6" height="1.1" fill="#555" opacity="0.38"/><rect x="102.7" y="729.6" width="2.4" height="1.1" fill="#555" opacity="0.38"/><rect x="111.0" y="729.6" width="2.6" height="1.1" fill="#555" opacity="0.38"/><rect x="118.1" y="729.6" width="10.1" height="1.1" fill="#555" opacity="0.38"/><rect x="134.2" y="729.6" width="10.4" height="1.1" fill="#555" opacity="0.38"/><rect x="48" y="735.5" width="1" height="1.2" fill="#888" opacity="0.3"/><rect x="52.5" y="735.5" width="23.0" height="1.1" fill="#555" opacity="0.38"/><rect x="93.2" y="735.5" width="1.6" height="1.1" fill="#555" opacity="0.38"/><rect x="102.7" y="735.5" width="2.4" height="1.1" fill="#555" opacity="0.38"/><rect x="111.0" y="735.5" width="2.6" height="1.1" fill="#555" opacity="0.38"/><rect x="118.1" y="735.5" width="10.1" height="1.1" fill="#555" opacity="0.38"/><rect x="134.2" y="735.5" width="10.4" height="1.1" fill="#555" opacity="0.38"/><rect x="48" y="741.4" width="1" height="1.2" fill="#888" opacity="0.3"/><rect x="52.5" y="741.4" width="25.0" height="1.1" fill="#555" opacity="0.38"/><rect x="93.2" y="741.4" width="1.6" height="1.1" fill="#555" opacity="0.38"/><rect x="102.7" y="741.4" width="2.4" height="1.1" fill="#555" opacity="0.38"/><rect x="111.0" y="741.4" width="2.6" height="1.1" fill="#555" opacity="0.38"/><rect x="118.1" y="741.4" width="10.1" height="1.1" fill="#555" opacity="0.38"/><rect x="134.2" y="741.4" width="10.4" height="1.1" fill="#555" opacity="0.38"/><rect x="48" y="747.3" width="1" height="1.2" fill="#888" opacity="0.3"/><rect x="52.5" y="747.2" width="18.5" height="1.1" fill="#555" opacity="0.38"/><rect x="93.2" y="747.2" width="1.6" height="1.1" fill="#555" opacity="0.38"/><rect x="102.7" y="747.2" width="2.4" height="1.1" fill="#555" opacity="0.38"/><rect x="111.0" y="747.2" width="2.6" height="1.1" fill="#555" opacity="0.38"/><rect x="118.1" y="747.2" width="10.1" height="1.1" fill="#555" opacity="0.38"/><rect x="134.2" y="747.2" width="10.4" height="1.1" fill="#555" opacity="0.38"/><rect x="48" y="759.0" width="1" height="1.2" fill="#888" opacity="0.3"/><rect x="52.5" y="759.0" width="18.2" height="1.1" fill="#555" opacity="0.38"/><rect x="93.2" y="759.0" width="1.6" height="1.1" fill="#555" opacity="0.38"/><rect x="102.7" y="759.0" width="2.4" height="1.1" fill="#555" opacity="0.38"/><rect x="111.0" y="759.0" width="2.6" height="1.1" fill="#555" opacity="0.38"/><rect x="118.1" y="759.0" width="10.1" height="1.1" fill="#555" opacity="0.38"/><rect x="134.2" y="759.0" width="10.4" height="1.1" fill="#555" opacity="0.38"/><rect x="48" y="766.1" width="1" height="1.2" fill="#888" opacity="0.3"/><rect x="52.5" y="766.1" width="31.0" height="1.1" fill="#555" opacity="0.38"/><rect x="52.5" y="768.3" width="16" height="1.1" fill="#555" opacity="0.38"/><rect x="93.2" y="766.1" width="1.6" height="1.1" fill="#555" opacity="0.38"/><rect x="102.7" y="766.1" width="2.4" height="1.1" fill="#555" opacity="0.38"/><rect x="111.0" y="766.1" width="2.6" height="1.1" fill="#555" opacity="0.38"/><rect x="118.1" y="766.1" width="10.1" height="1.1" fill="#555" opacity="0.38"/><rect x="134.2" y="766.1" width="10.4" height="1.1" fill="#555" opacity="0.38"/><rect x="48" y="773.0" width="1" height="1.2" fill="#888" opacity="0.3"/><rect x="52.5" y="773.0" width="20.5" height="1.1" fill="#555" opacity="0.38"/><rect x="93.2" y="773.0" width="1.6" height="1.1" fill="#555" opacity="0.38"/><rect x="102.7" y="773.0" width="2.4" height="1.1" fill="#555" opacity="0.38"/><rect x="111.0" y="773.0" width="2.6" height="1.1" fill="#555" opacity="0.38"/><rect x="118.1" y="773.0" width="10.1" height="1.1" fill="#555" opacity="0.38"/><rect x="134.2" y="773.0" width="10.4" height="1.1" fill="#555" opacity="0.38"/><rect x="48" y="779.0" width="1" height="1.2" fill="#888" opacity="0.3"/><rect x="52.5" y="779.0" width="18.2" height="1.1" fill="#555" opacity="0.38"/><rect x="93.2" y="779.0" width="1.6" height="1.1" fill="#555" opacity="0.38"/><rect x="102.7" y="779.0" width="2.4" height="1.1" fill="#555" opacity="0.38"/><rect x="111.0" y="779.0" width="2.6" height="1.1" fill="#555" opacity="0.38"/><rect x="118.1" y="779.0" width="10.1" height="1.1" fill="#555" opacity="0.38"/><rect x="134.2" y="779.0" width="10.4" height="1.1" fill="#555" opacity="0.38"/><rect x="48" y="784.9" width="1" height="1.2" fill="#888" opacity="0.3"/><rect x="52.5" y="784.9" width="18.5" height="1.1" fill="#555" opacity="0.38"/><rect x="93.2" y="784.9" width="1.6" height="1.1" fill="#555" opacity="0.38"/><rect x="102.7" y="784.9" width="2.4" height="1.1" fill="#555" opacity="0.38"/><rect x="111.0" y="784.9" width="2.6" height="1.1" fill="#555" opacity="0.38"/><rect x="118.1" y="784.9" width="10.1" height="1.1" fill="#555" opacity="0.38"/><rect x="134.2" y="784.9" width="10.4" height="1.1" fill="#555" opacity="0.38"/></g><g filter="url(#bl)"><rect x="35.2" y="812.7" width="16.4" height="1.5" fill="#111" opacity="0.6"/></g><rect x="33.9" y="821" width="117.5" height="3.9" fill="#3b6fd1"/><g filter="url(#bl)"><rect x="43.0" y="822.4" width="4.0" height="1.2" fill="#fff" opacity="0.55"/><rect x="59.0" y="822.4" width="7.0" height="1.2" fill="#fff" opacity="0.55"/><rect x="87.0" y="822.4" width="11.0" height="1.2" fill="#fff" opacity="0.55"/><rect x="118.0" y="822.4" width="9.0" height="1.2" fill="#fff" opacity="0.55"/><rect x="131.0" y="822.4" width="7.0" height="1.2" fill="#fff" opacity="0.55"/><rect x="142.0" y="822.4" width="8.0" height="1.2" fill="#fff" opacity="0.55"/><rect x="70.7" y="826.8" width="40.6" height="1" fill="#555" opacity="0.38"/><rect x="119.8" y="826.8" width="5.9" height="1" fill="#555" opacity="0.38"/><rect x="130.8" y="826.8" width="7.6" height="1" fill="#555" opacity="0.38"/><rect x="141.8" y="826.8" width="8.4" height="1" fill="#555" opacity="0.38"/><rect x="70.7" y="831.7" width="16.3" height="1" fill="#555" opacity="0.38"/><rect x="119.8" y="831.7" width="5.9" height="1" fill="#555" opacity="0.38"/><rect x="130.8" y="831.7" width="7.6" height="1" fill="#555" opacity="0.38"/><rect x="141.8" y="831.7" width="8.4" height="1" fill="#555" opacity="0.38"/><rect x="70.7" y="836.3" width="19.3" height="1" fill="#555" opacity="0.38"/><rect x="119.8" y="836.3" width="5.9" height="1" fill="#555" opacity="0.38"/><rect x="130.8" y="836.3" width="7.6" height="1" fill="#555" opacity="0.38"/><rect x="141.8" y="836.3" width="8.4" height="1" fill="#555" opacity="0.38"/></g></g></svg>
<div class="b" style="left:9.00px;top:841.80px;width:12.20px;height:12.20px;background:#fff;border:1px solid #b8b8b8;border-radius:3px;"></div>
<div class="t" style="left:25.50px;top:841px;font-size:11.8px;color:#1e1e1e;letter-spacing:0.157px;-webkit-text-stroke:0.35px;">Only Installed Solutions</div>
<div class="b" style="left:234.60px;top:68.50px;width:985.70px;height:741.80px;background:#fff;"></div>
<div class="b" style="left:270.60px;top:107.40px;width:949.70px;height:26.26px;background:#edf3fe;"></div>
<div class="b" style="left:270.60px;top:160.59px;width:949.70px;height:26.93px;background:#edf3fe;"></div>
<div class="b" style="left:270.60px;top:214.45px;width:949.70px;height:26.93px;background:#edf3fe;"></div>
<div class="b" style="left:270.60px;top:268.31px;width:949.70px;height:26.93px;background:#edf3fe;"></div>
<div class="b" style="left:270.60px;top:322.18px;width:949.70px;height:26.93px;background:#edf3fe;"></div>
<div class="b" style="left:270.60px;top:387.05px;width:949.70px;height:37.60px;background:#edf3fe;"></div>
<div class="b" style="left:270.60px;top:462.35px;width:949.70px;height:27.01px;background:#edf3fe;"></div>
<div class="b" style="left:270.60px;top:516.30px;width:949.70px;height:26.93px;background:#edf3fe;"></div>
<div class="b" style="left:270.60px;top:570.16px;width:949.70px;height:26.93px;background:#edf3fe;"></div>
<div class="b" style="left:270.60px;top:624.02px;width:949.70px;height:26.93px;background:#edf3fe;"></div>
<div class="b" style="left:270.60px;top:677.88px;width:949.70px;height:26.93px;background:#edf3fe;"></div>
<div class="b" style="left:270.60px;top:731.74px;width:949.70px;height:26.93px;background:#edf3fe;"></div>
<div class="b" style="left:270.60px;top:785.60px;width:949.70px;height:24.70px;background:#edf3fe;"></div>
<div class="b" style="left:270.60px;top:240.78px;width:949.70px;height:28.23px;background:#b3e2fd;border-top:1.2px solid #4a9de0;border-bottom:1.2px solid #4a9de0;"></div>
<div class="b" style="left:270.60px;top:240.78px;width:14.40px;height:28.23px;border:1.2px solid #4a9de0;background:#a9d9f9;"></div>
<div class="b" style="left:270.60px;top:133.06px;width:949.70px;height:1.20px;background:#d6dbe2;"></div>
<div class="b" style="left:270.60px;top:160.00px;width:949.70px;height:1.20px;background:#d6dbe2;"></div>
<div class="b" style="left:270.60px;top:186.92px;width:949.70px;height:1.20px;background:#d6dbe2;"></div>
<div class="b" style="left:270.60px;top:213.85px;width:949.70px;height:1.20px;background:#d6dbe2;"></div>
<div class="b" style="left:270.60px;top:294.64px;width:949.70px;height:1.20px;background:#d6dbe2;"></div>
<div class="b" style="left:270.60px;top:321.57px;width:949.70px;height:1.20px;background:#d6dbe2;"></div>
<div class="b" style="left:270.60px;top:348.50px;width:949.70px;height:1.20px;background:#d6dbe2;"></div>
<div class="b" style="left:270.60px;top:386.45px;width:949.70px;height:1.20px;background:#d6dbe2;"></div>
<div class="b" style="left:270.60px;top:424.05px;width:949.70px;height:1.20px;background:#d6dbe2;"></div>
<div class="b" style="left:270.60px;top:461.75px;width:949.70px;height:1.20px;background:#d6dbe2;"></div>
<div class="b" style="left:270.60px;top:488.76px;width:949.70px;height:1.20px;background:#d6dbe2;"></div>
<div class="b" style="left:270.60px;top:515.70px;width:949.70px;height:1.20px;background:#d6dbe2;"></div>
<div class="b" style="left:270.60px;top:542.62px;width:949.70px;height:1.20px;background:#d6dbe2;"></div>
<div class="b" style="left:270.60px;top:569.56px;width:949.70px;height:1.20px;background:#d6dbe2;"></div>
<div class="b" style="left:270.60px;top:596.49px;width:949.70px;height:1.20px;background:#d6dbe2;"></div>
<div class="b" style="left:270.60px;top:623.42px;width:949.70px;height:1.20px;background:#d6dbe2;"></div>
<div class="b" style="left:270.60px;top:650.35px;width:949.70px;height:1.20px;background:#d6dbe2;"></div>
<div class="b" style="left:270.60px;top:677.27px;width:949.70px;height:1.20px;background:#d6dbe2;"></div>
<div class="b" style="left:270.60px;top:704.21px;width:949.70px;height:1.20px;background:#d6dbe2;"></div>
<div class="b" style="left:270.60px;top:731.14px;width:949.70px;height:1.20px;background:#d6dbe2;"></div>
<div class="b" style="left:270.60px;top:758.07px;width:949.70px;height:1.20px;background:#d6dbe2;"></div>
<div class="b" style="left:270.60px;top:785.00px;width:949.70px;height:1.20px;background:#d6dbe2;"></div>
<div class="b" style="left:234.60px;top:68.50px;width:36.00px;height:741.80px;background:#ececec;"></div>
<div class="b" style="left:234.60px;top:106.55px;width:36.00px;height:1.70px;background:#c3c3c3;"></div>
<div class="b" style="left:234.60px;top:132.81px;width:36.00px;height:1.70px;background:#c3c3c3;"></div>
<div class="b" style="left:234.60px;top:159.75px;width:36.00px;height:1.70px;background:#c3c3c3;"></div>
<div class="b" style="left:234.60px;top:186.67px;width:36.00px;height:1.70px;background:#c3c3c3;"></div>
<div class="b" style="left:234.60px;top:213.60px;width:36.00px;height:1.70px;background:#c3c3c3;"></div>
<div class="b" style="left:234.60px;top:240.53px;width:36.00px;height:1.70px;background:#c3c3c3;"></div>
<div class="b" style="left:234.60px;top:267.46px;width:36.00px;height:1.70px;background:#c3c3c3;"></div>
<div class="b" style="left:234.60px;top:294.39px;width:36.00px;height:1.70px;background:#c3c3c3;"></div>
<div class="b" style="left:234.60px;top:321.32px;width:36.00px;height:1.70px;background:#c3c3c3;"></div>
<div class="b" style="left:234.60px;top:348.25px;width:36.00px;height:1.70px;background:#c3c3c3;"></div>
<div class="b" style="left:234.60px;top:386.20px;width:36.00px;height:1.70px;background:#c3c3c3;"></div>
<div class="b" style="left:234.60px;top:423.80px;width:36.00px;height:1.70px;background:#c3c3c3;"></div>
<div class="b" style="left:234.60px;top:461.50px;width:36.00px;height:1.70px;background:#c3c3c3;"></div>
<div class="b" style="left:234.60px;top:488.51px;width:36.00px;height:1.70px;background:#c3c3c3;"></div>
<div class="b" style="left:234.60px;top:515.45px;width:36.00px;height:1.70px;background:#c3c3c3;"></div>
<div class="b" style="left:234.60px;top:542.38px;width:36.00px;height:1.70px;background:#c3c3c3;"></div>
<div class="b" style="left:234.60px;top:569.31px;width:36.00px;height:1.70px;background:#c3c3c3;"></div>
<div class="b" style="left:234.60px;top:596.24px;width:36.00px;height:1.70px;background:#c3c3c3;"></div>
<div class="b" style="left:234.60px;top:623.17px;width:36.00px;height:1.70px;background:#c3c3c3;"></div>
<div class="b" style="left:234.60px;top:650.10px;width:36.00px;height:1.70px;background:#c3c3c3;"></div>
<div class="b" style="left:234.60px;top:677.02px;width:36.00px;height:1.70px;background:#c3c3c3;"></div>
<div class="b" style="left:234.60px;top:703.96px;width:36.00px;height:1.70px;background:#c3c3c3;"></div>
<div class="b" style="left:234.60px;top:730.89px;width:36.00px;height:1.70px;background:#c3c3c3;"></div>
<div class="b" style="left:234.60px;top:757.82px;width:36.00px;height:1.70px;background:#c3c3c3;"></div>
<div class="b" style="left:234.60px;top:784.75px;width:36.00px;height:1.70px;background:#c3c3c3;"></div>
<div class="b" style="left:234.10px;top:68.50px;width:1.00px;height:741.80px;background:#b4b4b4;"></div>
<div class="b" style="left:270.10px;top:68.50px;width:1.00px;height:741.80px;background:#a9a9a9;"></div>
<div class="b" style="left:284.00px;top:107.00px;width:1.00px;height:703.30px;background:#d3d6db;"></div>
<div class="b" style="left:481.60px;top:107.00px;width:1.00px;height:703.30px;background:#d0d3d8;"></div>
<div class="b" style="left:579.10px;top:104.00px;width:1.00px;height:706.30px;background:#bfc3c9;"></div>
<div class="b" style="left:769.80px;top:104.00px;width:1.00px;height:706.30px;background:#bfc3c9;"></div>
<div class="b" style="left:960.80px;top:104.00px;width:1.00px;height:706.30px;background:#bfc3c9;"></div>
<div class="b" style="left:1145.30px;top:104.00px;width:1.00px;height:706.30px;background:#bfc3c9;"></div>
<div class="b" style="left:234.60px;top:68.00px;width:985.70px;height:36.60px;background:#ececec;border-top:1px solid #b4b4b4;border-bottom:1px solid #b4b4b4;"></div>
<div class="b" style="left:234.60px;top:104.60px;width:36.00px;height:2.80px;background:#c4c4c4;"></div>
<div class="b" style="left:270.10px;top:68.50px;width:1.00px;height:36.10px;background:#9f9f9f;"></div>
<div class="b" style="left:283.80px;top:68.50px;width:1.40px;height:36.10px;background:#a6a6a6;"></div>
<div class="b" style="left:481.50px;top:68.50px;width:1.20px;height:36.10px;background:#b0b0b0;"></div>
<div class="b" style="left:234.10px;top:68.50px;width:1.00px;height:38.50px;background:#b4b4b4;"></div>
<div class="b" style="left:482.10px;top:86.20px;width:738.20px;height:1.10px;background:#b9b9b9;"></div>
<div class="b" style="left:579.10px;top:68.50px;width:1.00px;height:36.10px;background:#adadad;"></div>
<div class="b" style="left:769.80px;top:68.50px;width:1.00px;height:18.20px;background:#adadad;"></div>
<div class="b" style="left:960.80px;top:68.50px;width:1.00px;height:18.20px;background:#adadad;"></div>
<div class="b" style="left:1145.30px;top:68.50px;width:1.00px;height:18.20px;background:#adadad;"></div>
<div class="b" style="left:492.90px;top:87.00px;width:1.00px;height:17.60px;background:#b9b9b9;"></div>
<div class="t" style="left:514.95px;width:0;display:flex;justify-content:center;top:89px;font-size:9.5px;color:#1e1e1e;letter-spacing:-0.331px;-webkit-text-stroke:0.35px;"><span style="flex:none">w25</span></div>
<div class="b" style="left:535.97px;top:87.00px;width:1.00px;height:17.60px;background:#b9b9b9;"></div>
<div class="t" style="left:558.02px;width:0;display:flex;justify-content:center;top:89px;font-size:9.5px;color:#1e1e1e;letter-spacing:-0.331px;-webkit-text-stroke:0.35px;"><span style="flex:none">w26</span></div>
<div class="t" style="left:601.09px;width:0;display:flex;justify-content:center;top:89px;font-size:9.5px;color:#1e1e1e;letter-spacing:-0.331px;-webkit-text-stroke:0.35px;"><span style="flex:none">w27</span></div>
<div class="b" style="left:622.11px;top:87.00px;width:1.00px;height:17.60px;background:#b9b9b9;"></div>
<div class="t" style="left:644.16px;width:0;display:flex;justify-content:center;top:89px;font-size:9.5px;color:#1e1e1e;letter-spacing:-0.331px;-webkit-text-stroke:0.35px;"><span style="flex:none">w28</span></div>
<div class="b" style="left:665.18px;top:87.00px;width:1.00px;height:17.60px;background:#b9b9b9;"></div>
<div class="t" style="left:687.23px;width:0;display:flex;justify-content:center;top:89px;font-size:9.5px;color:#1e1e1e;letter-spacing:-0.331px;-webkit-text-stroke:0.35px;"><span style="flex:none">w29</span></div>
<div class="b" style="left:708.25px;top:87.00px;width:1.00px;height:17.60px;background:#b9b9b9;"></div>
<div class="t" style="left:730.30px;width:0;display:flex;justify-content:center;top:89px;font-size:9.5px;color:#1e1e1e;letter-spacing:-0.331px;-webkit-text-stroke:0.35px;"><span style="flex:none">w30</span></div>
<div class="b" style="left:751.32px;top:87.00px;width:1.00px;height:17.60px;background:#b9b9b9;"></div>
<div class="t" style="left:773.37px;width:0;display:flex;justify-content:center;top:89px;font-size:9.5px;color:#1e1e1e;letter-spacing:-0.331px;-webkit-text-stroke:0.35px;"><span style="flex:none">w31</span></div>
<div class="b" style="left:794.39px;top:87.00px;width:1.00px;height:17.60px;background:#b9b9b9;"></div>
<div class="t" style="left:816.44px;width:0;display:flex;justify-content:center;top:89px;font-size:9.5px;color:#1e1e1e;letter-spacing:-0.331px;-webkit-text-stroke:0.35px;"><span style="flex:none">w32</span></div>
<div class="b" style="left:837.46px;top:87.00px;width:1.00px;height:17.60px;background:#b9b9b9;"></div>
<div class="t" style="left:859.51px;width:0;display:flex;justify-content:center;top:89px;font-size:9.5px;color:#1e1e1e;letter-spacing:-0.331px;-webkit-text-stroke:0.35px;"><span style="flex:none">w33</span></div>
<div class="b" style="left:880.53px;top:87.00px;width:1.00px;height:17.60px;background:#b9b9b9;"></div>
<div class="t" style="left:902.58px;width:0;display:flex;justify-content:center;top:89px;font-size:9.5px;color:#1e1e1e;letter-spacing:-0.331px;-webkit-text-stroke:0.35px;"><span style="flex:none">w34</span></div>
<div class="b" style="left:923.60px;top:87.00px;width:1.00px;height:17.60px;background:#b9b9b9;"></div>
<div class="t" style="left:945.65px;width:0;display:flex;justify-content:center;top:89px;font-size:9.5px;color:#1e1e1e;letter-spacing:-0.331px;-webkit-text-stroke:0.35px;"><span style="flex:none">w35</span></div>
<div class="b" style="left:966.67px;top:87.00px;width:1.00px;height:17.60px;background:#b9b9b9;"></div>
<div class="t" style="left:988.72px;width:0;display:flex;justify-content:center;top:89px;font-size:9.5px;color:#1e1e1e;letter-spacing:-0.331px;-webkit-text-stroke:0.35px;"><span style="flex:none">w36</span></div>
<div class="b" style="left:1009.74px;top:87.00px;width:1.00px;height:17.60px;background:#b9b9b9;"></div>
<div class="t" style="left:1031.79px;width:0;display:flex;justify-content:center;top:89px;font-size:9.5px;color:#1e1e1e;letter-spacing:-0.331px;-webkit-text-stroke:0.35px;"><span style="flex:none">w37</span></div>
<div class="b" style="left:1052.81px;top:87.00px;width:1.00px;height:17.60px;background:#b9b9b9;"></div>
<div class="t" style="left:1074.86px;width:0;display:flex;justify-content:center;top:89px;font-size:9.5px;color:#1e1e1e;letter-spacing:-0.331px;-webkit-text-stroke:0.35px;"><span style="flex:none">w38</span></div>
<div class="b" style="left:1095.88px;top:87.00px;width:1.00px;height:17.60px;background:#b9b9b9;"></div>
<div class="t" style="left:1117.93px;width:0;display:flex;justify-content:center;top:89px;font-size:9.5px;color:#1e1e1e;letter-spacing:-0.331px;-webkit-text-stroke:0.35px;"><span style="flex:none">w39</span></div>
<div class="b" style="left:1138.95px;top:87.00px;width:1.00px;height:17.60px;background:#b9b9b9;"></div>
<div class="t" style="left:1161.00px;width:0;display:flex;justify-content:center;top:89px;font-size:9.5px;color:#1e1e1e;letter-spacing:-0.331px;-webkit-text-stroke:0.35px;"><span style="flex:none">w40</span></div>
<div class="b" style="left:1182.02px;top:87.00px;width:1.00px;height:17.60px;background:#b9b9b9;"></div>
<div class="t" style="left:1204.07px;width:0;display:flex;justify-content:center;top:89px;font-size:9.5px;color:#1e1e1e;letter-spacing:-0.331px;-webkit-text-stroke:0.35px;"><span style="flex:none">w41</span></div>
<div class="t" style="left:252.30px;width:0;display:flex;justify-content:center;top:79px;font-size:10.5px;color:#111;-webkit-text-stroke:0.4px;font-style:italic;"><span style="flex:none">#</span></div>
<div class="t" style="left:383.00px;width:0;display:flex;justify-content:center;top:80px;font-size:11px;color:#111;letter-spacing:0.331px;-webkit-text-stroke:0.35px;"><span style="flex:none">Name</span></div>
<div class="t" style="left:584.10px;top:71px;font-size:9.5px;color:#1e1e1e;letter-spacing:-0.267px;-webkit-text-stroke:0.35px;">July 2018</div>
<div class="t" style="left:775.00px;top:71px;font-size:9.5px;color:#1e1e1e;letter-spacing:-0.224px;-webkit-text-stroke:0.35px;">August 2018</div>
<div class="t" style="left:966.00px;top:71px;font-size:9.5px;color:#1e1e1e;letter-spacing:-0.314px;-webkit-text-stroke:0.35px;">September 2018</div>
<div class="t" style="left:1150.00px;top:71px;font-size:9.5px;color:#1e1e1e;letter-spacing:-0.223px;-webkit-text-stroke:0.35px;">October 2018</div>
<div class="t" style="right:1231.40px;top:113px;font-size:10.8px;color:#0a0a0a;-webkit-text-stroke:0.45px;">6</div>
<svg style="left:0;top:0" width="1500" height="857"><path d="M274.45 114.50 V119.30 M272.05 116.90 H276.9" stroke="#6a6a6a" stroke-width="1.65" fill="none"/><path d="M276.45 122.15 L279.6 119.00" stroke="#6a6a6a" stroke-width="3.5" stroke-linecap="round"/><circle cx="276.4" cy="122.20" r="0.8" fill="#edf3fe"/><circle cx="279.65" cy="118.95" r="0.8" fill="#edf3fe"/></svg>
<div class="t" style="left:315.70px;top:113px;font-size:10.5px;color:#111;letter-spacing:-0.362px;-webkit-text-stroke:0.35px;">Market Research</div>
<div class="t" style="right:1231.40px;top:140px;font-size:10.8px;color:#0a0a0a;-webkit-text-stroke:0.45px;">7</div>
<svg style="left:0;top:0" width="1500" height="857"><path d="M274.45 141.43 V146.23 M272.05 143.83 H276.9" stroke="#6a6a6a" stroke-width="1.65" fill="none"/><path d="M276.45 149.08 L279.6 145.93" stroke="#6a6a6a" stroke-width="3.5" stroke-linecap="round"/><circle cx="276.4" cy="149.13" r="0.8" fill="#fff"/><circle cx="279.65" cy="145.88" r="0.8" fill="#fff"/></svg>
<div class="t" style="left:315.70px;top:140px;font-size:10.5px;color:#111;letter-spacing:-0.336px;-webkit-text-stroke:0.35px;">Creative Concept &amp; Design 1</div>
<div class="t" style="right:1231.40px;top:167px;font-size:10.8px;color:#0a0a0a;-webkit-text-stroke:0.45px;">8</div>
<svg style="left:0;top:0" width="1500" height="857"><path d="M274.45 168.36 V173.16 M272.05 170.76 H276.9" stroke="#6a6a6a" stroke-width="1.65" fill="none"/><path d="M276.45 176.01 L279.6 172.86" stroke="#6a6a6a" stroke-width="3.5" stroke-linecap="round"/><circle cx="276.4" cy="176.06" r="0.8" fill="#edf3fe"/><circle cx="279.65" cy="172.81" r="0.8" fill="#edf3fe"/></svg>
<div class="t" style="left:315.70px;top:167px;font-size:10.5px;color:#111;letter-spacing:-0.317px;-webkit-text-stroke:0.35px;">Creative Concept &amp; Design 2</div>
<div class="t" style="right:1231.40px;top:194px;font-size:10.8px;color:#0a0a0a;-webkit-text-stroke:0.45px;">9</div>
<svg style="left:0;top:0" width="1500" height="857"><path d="M274.45 195.29 V200.09 M272.05 197.69 H276.9" stroke="#6a6a6a" stroke-width="1.65" fill="none"/><path d="M276.45 202.94 L279.6 199.79" stroke="#6a6a6a" stroke-width="3.5" stroke-linecap="round"/><circle cx="276.4" cy="202.99" r="0.8" fill="#fff"/><circle cx="279.65" cy="199.74" r="0.8" fill="#fff"/></svg>
<div class="t" style="left:315.70px;top:193px;font-size:10.5px;color:#111;letter-spacing:-0.317px;-webkit-text-stroke:0.35px;">Creative Concept &amp; Design 3</div>
<div class="t" style="right:1231.40px;top:221px;font-size:10.8px;color:#0a0a0a;-webkit-text-stroke:0.45px;">10</div>
<svg style="left:0;top:0" width="1500" height="857"><path d="M274.45 222.22 V227.02 M272.05 224.62 H276.9" stroke="#6a6a6a" stroke-width="1.65" fill="none"/><path d="M276.45 229.87 L279.6 226.72" stroke="#6a6a6a" stroke-width="3.5" stroke-linecap="round"/><circle cx="276.4" cy="229.92" r="0.8" fill="#edf3fe"/><circle cx="279.65" cy="226.67" r="0.8" fill="#edf3fe"/></svg>
<div class="t" style="left:315.70px;top:220px;font-size:10.5px;color:#111;letter-spacing:-0.550px;-webkit-text-stroke:0.35px;">Bids</div>
<div class="t" style="right:1231.40px;top:248px;font-size:10.8px;color:#0a0a0a;-webkit-text-stroke:0.45px;">11</div>
<svg style="left:0;top:0" width="1500" height="857"><path d="M274.45 249.15 V253.95 M272.05 251.55 H276.9" stroke="#3f88c6" stroke-width="1.65" fill="none"/><path d="M276.45 256.80 L279.6 253.65" stroke="#3f88c6" stroke-width="3.5" stroke-linecap="round"/><circle cx="276.4" cy="256.85" r="0.8" fill="#a9d9f9"/><circle cx="279.65" cy="253.60" r="0.8" fill="#a9d9f9"/></svg>
<div class="t" style="left:315.70px;top:247px;font-size:10.5px;color:#1f5075;letter-spacing:-0.389px;-webkit-text-stroke:0.1px;">Production</div>
<div class="t" style="right:1231.40px;top:275px;font-size:10.8px;color:#0a0a0a;-webkit-text-stroke:0.45px;">12</div>
<svg style="left:0;top:0" width="1500" height="857"><path d="M274.45 276.08 V280.88 M272.05 278.48 H276.9" stroke="#6a6a6a" stroke-width="1.65" fill="none"/><path d="M276.45 283.73 L279.6 280.58" stroke="#6a6a6a" stroke-width="3.5" stroke-linecap="round"/><circle cx="276.4" cy="283.78" r="0.8" fill="#edf3fe"/><circle cx="279.65" cy="280.53" r="0.8" fill="#edf3fe"/></svg>
<div class="t" style="left:315.70px;top:274px;font-size:10.5px;color:#111;letter-spacing:-0.321px;-webkit-text-stroke:0.35px;">Market &amp; Sales Strategy</div>
<div class="t" style="right:1231.40px;top:302px;font-size:10.8px;color:#0a0a0a;-webkit-text-stroke:0.45px;">13</div>
<svg style="left:0;top:0" width="1500" height="857"><path d="M274.45 303.01 V307.81 M272.05 305.41 H276.9" stroke="#6a6a6a" stroke-width="1.65" fill="none"/><path d="M276.45 310.66 L279.6 307.51" stroke="#6a6a6a" stroke-width="3.5" stroke-linecap="round"/><circle cx="276.4" cy="310.71" r="0.8" fill="#fff"/><circle cx="279.65" cy="307.46" r="0.8" fill="#fff"/></svg>
<div class="t" style="left:315.70px;top:301px;font-size:10.5px;color:#111;letter-spacing:-0.342px;-webkit-text-stroke:0.35px;">Ad Design &amp; Copy</div>
<div class="t" style="right:1231.40px;top:329px;font-size:10.8px;color:#0a0a0a;-webkit-text-stroke:0.45px;">14</div>
<svg style="left:0;top:0" width="1500" height="857"><path d="M274.45 329.94 V334.74 M272.05 332.34 H276.9" stroke="#6a6a6a" stroke-width="1.65" fill="none"/><path d="M276.45 337.59 L279.6 334.44" stroke="#6a6a6a" stroke-width="3.5" stroke-linecap="round"/><circle cx="276.4" cy="337.64" r="0.8" fill="#edf3fe"/><circle cx="279.65" cy="334.39" r="0.8" fill="#edf3fe"/></svg>
<div class="t" style="left:315.70px;top:328px;font-size:10.5px;color:#111;letter-spacing:-0.297px;-webkit-text-stroke:0.35px;">Direct Mail Design</div>
<div class="t" style="right:1231.40px;top:361px;font-size:10.8px;color:#0a0a0a;-webkit-text-stroke:0.45px;">15</div>
<svg style="left:0;top:0" width="1500" height="857"><path d="M274.45 362.55 V367.35 M272.05 364.95 H276.9" stroke="#6a6a6a" stroke-width="1.65" fill="none"/><path d="M276.45 370.20 L279.6 367.05" stroke="#6a6a6a" stroke-width="3.5" stroke-linecap="round"/><circle cx="276.4" cy="370.25" r="0.8" fill="#fff"/><circle cx="279.65" cy="367.00" r="0.8" fill="#fff"/></svg>
<div class="t" style="left:315.70px;top:361px;font-size:10.5px;color:#111;letter-spacing:-0.280px;-webkit-text-stroke:0.35px;">Printing</div>
<div class="t" style="right:1231.40px;top:399px;font-size:10.8px;color:#0a0a0a;-webkit-text-stroke:0.45px;">16</div>
<svg style="left:0;top:0" width="1500" height="857"><path d="M274.45 400.15 V404.95 M272.05 402.55 H276.9" stroke="#6a6a6a" stroke-width="1.65" fill="none"/><path d="M276.45 407.80 L279.6 404.65" stroke="#6a6a6a" stroke-width="3.5" stroke-linecap="round"/><circle cx="276.4" cy="407.85" r="0.8" fill="#edf3fe"/><circle cx="279.65" cy="404.60" r="0.8" fill="#edf3fe"/></svg>
<div class="t" style="left:315.70px;top:398px;font-size:10.5px;color:#111;letter-spacing:-0.336px;-webkit-text-stroke:0.35px;">Press Releases</div>
<div class="t" style="right:1231.40px;top:437px;font-size:10.8px;color:#0a0a0a;-webkit-text-stroke:0.45px;">17</div>
<svg style="left:0;top:0" width="1500" height="857"><path d="M274.45 437.85 V442.65 M272.05 440.25 H276.9" stroke="#6a6a6a" stroke-width="1.65" fill="none"/><path d="M276.45 445.50 L279.6 442.35" stroke="#6a6a6a" stroke-width="3.5" stroke-linecap="round"/><circle cx="276.4" cy="445.55" r="0.8" fill="#fff"/><circle cx="279.65" cy="442.30" r="0.8" fill="#fff"/></svg>
<div class="t" style="left:315.70px;top:436px;font-size:10.5px;color:#111;letter-spacing:-0.315px;-webkit-text-stroke:0.35px;">Press Tour</div>
<div class="t" style="right:1231.40px;top:469px;font-size:10.8px;color:#0a0a0a;-webkit-text-stroke:0.45px;">18</div>
<svg style="left:0;top:0" width="1500" height="857"><path d="M274.45 470.20 V475.00 M272.05 472.60 H276.9" stroke="#6a6a6a" stroke-width="1.65" fill="none"/><path d="M276.45 477.85 L279.6 474.70" stroke="#6a6a6a" stroke-width="3.5" stroke-linecap="round"/><circle cx="276.4" cy="477.90" r="0.8" fill="#edf3fe"/><circle cx="279.65" cy="474.65" r="0.8" fill="#edf3fe"/></svg>
<div class="t" style="left:315.70px;top:468px;font-size:10.5px;color:#111;letter-spacing:-0.445px;-webkit-text-stroke:0.35px;">Launch</div>
<div class="t" style="right:1231.40px;top:496px;font-size:10.8px;color:#0a0a0a;-webkit-text-stroke:0.45px;">19</div>
<svg style="left:0;top:0" width="1500" height="857"><path d="M274.45 497.13 V501.93 M272.05 499.53 H276.9" stroke="#6a6a6a" stroke-width="1.65" fill="none"/><path d="M276.45 504.78 L279.6 501.63" stroke="#6a6a6a" stroke-width="3.5" stroke-linecap="round"/><circle cx="276.4" cy="504.83" r="0.8" fill="#fff"/><circle cx="279.65" cy="501.58" r="0.8" fill="#fff"/></svg>
<div class="b" style="left:288.80px;top:498.58px;width:8.20px;height:7.60px;border:1.2px solid #55a4d6;background:#fff;"></div>
<div class="b" style="left:291.00px;top:501.78px;width:3.80px;height:1.20px;background:#55a4d6;"></div>
<div class="t" style="left:301.00px;top:495px;font-size:10.5px;color:#111;font-weight:bold;letter-spacing:-0.385px;-webkit-text-stroke:0.35px;">Project Houston</div>
<div class="t" style="right:1231.40px;top:523px;font-size:10.8px;color:#0a0a0a;-webkit-text-stroke:0.45px;">20</div>
<svg style="left:0;top:0" width="1500" height="857"><path d="M274.45 524.06 V528.86 M272.05 526.46 H276.9" stroke="#6a6a6a" stroke-width="1.65" fill="none"/><path d="M276.45 531.71 L279.6 528.56" stroke="#6a6a6a" stroke-width="3.5" stroke-linecap="round"/><circle cx="276.4" cy="531.76" r="0.8" fill="#edf3fe"/><circle cx="279.65" cy="528.51" r="0.8" fill="#edf3fe"/></svg>
<div class="t" style="left:315.70px;top:522px;font-size:10.5px;color:#111;letter-spacing:-0.347px;-webkit-text-stroke:0.35px;">Meetings</div>
<div class="t" style="right:1231.40px;top:550px;font-size:10.8px;color:#0a0a0a;-webkit-text-stroke:0.45px;">21</div>
<svg style="left:0;top:0" width="1500" height="857"><path d="M274.45 550.99 V555.79 M272.05 553.39 H276.9" stroke="#6a6a6a" stroke-width="1.65" fill="none"/><path d="M276.45 558.64 L279.6 555.49" stroke="#6a6a6a" stroke-width="3.5" stroke-linecap="round"/><circle cx="276.4" cy="558.69" r="0.8" fill="#fff"/><circle cx="279.65" cy="555.44" r="0.8" fill="#fff"/></svg>
<div class="t" style="left:315.70px;top:549px;font-size:10.5px;color:#111;letter-spacing:-0.347px;-webkit-text-stroke:0.35px;">Meetings</div>
<div class="t" style="right:1231.40px;top:577px;font-size:10.8px;color:#0a0a0a;-webkit-text-stroke:0.45px;">22</div>
<svg style="left:0;top:0" width="1500" height="857"><path d="M274.45 577.92 V582.72 M272.05 580.32 H276.9" stroke="#6a6a6a" stroke-width="1.65" fill="none"/><path d="M276.45 585.57 L279.6 582.42" stroke="#6a6a6a" stroke-width="3.5" stroke-linecap="round"/><circle cx="276.4" cy="585.62" r="0.8" fill="#edf3fe"/><circle cx="279.65" cy="582.37" r="0.8" fill="#edf3fe"/></svg>
<div class="t" style="left:315.70px;top:576px;font-size:10.5px;color:#111;letter-spacing:-0.347px;-webkit-text-stroke:0.35px;">Meetings</div>
<div class="t" style="right:1231.40px;top:604px;font-size:10.8px;color:#0a0a0a;-webkit-text-stroke:0.45px;">23</div>
<svg style="left:0;top:0" width="1500" height="857"><path d="M274.45 604.85 V609.65 M272.05 607.25 H276.9" stroke="#6a6a6a" stroke-width="1.65" fill="none"/><path d="M276.45 612.50 L279.6 609.35" stroke="#6a6a6a" stroke-width="3.5" stroke-linecap="round"/><circle cx="276.4" cy="612.55" r="0.8" fill="#fff"/><circle cx="279.65" cy="609.30" r="0.8" fill="#fff"/></svg>
<div class="t" style="left:315.70px;top:603px;font-size:10.5px;color:#111;letter-spacing:-0.347px;-webkit-text-stroke:0.35px;">Meetings</div>
<div class="t" style="right:1231.40px;top:630px;font-size:10.8px;color:#0a0a0a;-webkit-text-stroke:0.45px;">24</div>
<svg style="left:0;top:0" width="1500" height="857"><path d="M274.45 631.78 V636.58 M272.05 634.18 H276.9" stroke="#6a6a6a" stroke-width="1.65" fill="none"/><path d="M276.45 639.43 L279.6 636.28" stroke="#6a6a6a" stroke-width="3.5" stroke-linecap="round"/><circle cx="276.4" cy="639.48" r="0.8" fill="#edf3fe"/><circle cx="279.65" cy="636.23" r="0.8" fill="#edf3fe"/></svg>
<div class="t" style="left:315.70px;top:630px;font-size:10.5px;color:#111;letter-spacing:-0.362px;-webkit-text-stroke:0.35px;">Market Research</div>
<div class="t" style="right:1231.40px;top:657px;font-size:10.8px;color:#0a0a0a;-webkit-text-stroke:0.45px;">25</div>
<svg style="left:0;top:0" width="1500" height="857"><path d="M274.45 658.71 V663.51 M272.05 661.11 H276.9" stroke="#6a6a6a" stroke-width="1.65" fill="none"/><path d="M276.45 666.36 L279.6 663.21" stroke="#6a6a6a" stroke-width="3.5" stroke-linecap="round"/><circle cx="276.4" cy="666.41" r="0.8" fill="#fff"/><circle cx="279.65" cy="663.16" r="0.8" fill="#fff"/></svg>
<div class="t" style="left:315.70px;top:657px;font-size:10.5px;color:#111;letter-spacing:-0.317px;-webkit-text-stroke:0.35px;">Creative Concept &amp; Design 4</div>
<div class="t" style="right:1231.40px;top:684px;font-size:10.8px;color:#0a0a0a;-webkit-text-stroke:0.45px;">26</div>
<svg style="left:0;top:0" width="1500" height="857"><path d="M274.45 685.64 V690.44 M272.05 688.04 H276.9" stroke="#6a6a6a" stroke-width="1.65" fill="none"/><path d="M276.45 693.29 L279.6 690.14" stroke="#6a6a6a" stroke-width="3.5" stroke-linecap="round"/><circle cx="276.4" cy="693.34" r="0.8" fill="#edf3fe"/><circle cx="279.65" cy="690.09" r="0.8" fill="#edf3fe"/></svg>
<div class="t" style="left:315.70px;top:684px;font-size:10.5px;color:#111;letter-spacing:-0.317px;-webkit-text-stroke:0.35px;">Creative Concept &amp; Design 5</div>
<div class="t" style="right:1231.40px;top:711px;font-size:10.8px;color:#0a0a0a;-webkit-text-stroke:0.45px;">27</div>
<svg style="left:0;top:0" width="1500" height="857"><path d="M274.45 712.57 V717.37 M272.05 714.97 H276.9" stroke="#6a6a6a" stroke-width="1.65" fill="none"/><path d="M276.45 720.22 L279.6 717.07" stroke="#6a6a6a" stroke-width="3.5" stroke-linecap="round"/><circle cx="276.4" cy="720.27" r="0.8" fill="#fff"/><circle cx="279.65" cy="717.02" r="0.8" fill="#fff"/></svg>
<div class="t" style="left:315.70px;top:711px;font-size:10.5px;color:#111;letter-spacing:-0.317px;-webkit-text-stroke:0.35px;">Creative Concept &amp; Design 6</div>
<div class="t" style="right:1231.40px;top:738px;font-size:10.8px;color:#0a0a0a;-webkit-text-stroke:0.45px;">28</div>
<svg style="left:0;top:0" width="1500" height="857"><path d="M274.45 739.50 V744.30 M272.05 741.90 H276.9" stroke="#6a6a6a" stroke-width="1.65" fill="none"/><path d="M276.45 747.15 L279.6 744.00" stroke="#6a6a6a" stroke-width="3.5" stroke-linecap="round"/><circle cx="276.4" cy="747.20" r="0.8" fill="#edf3fe"/><circle cx="279.65" cy="743.95" r="0.8" fill="#edf3fe"/></svg>
<div class="t" style="left:315.70px;top:738px;font-size:10.5px;color:#111;letter-spacing:-0.550px;-webkit-text-stroke:0.35px;">Bids</div>
<div class="t" style="right:1231.40px;top:765px;font-size:10.8px;color:#0a0a0a;-webkit-text-stroke:0.45px;">29</div>
<svg style="left:0;top:0" width="1500" height="857"><path d="M274.45 766.43 V771.23 M272.05 768.83 H276.9" stroke="#6a6a6a" stroke-width="1.65" fill="none"/><path d="M276.45 774.08 L279.6 770.93" stroke="#6a6a6a" stroke-width="3.5" stroke-linecap="round"/><circle cx="276.4" cy="774.13" r="0.8" fill="#fff"/><circle cx="279.65" cy="770.88" r="0.8" fill="#fff"/></svg>
<div class="t" style="left:315.70px;top:765px;font-size:10.5px;color:#111;letter-spacing:-0.389px;-webkit-text-stroke:0.35px;">Production</div>
<div class="t" style="right:1231.40px;top:792px;font-size:10.8px;color:#0a0a0a;-webkit-text-stroke:0.45px;">30</div>
<svg style="left:0;top:0" width="1500" height="857"><path d="M274.45 793.36 V798.16 M272.05 795.76 H276.9" stroke="#6a6a6a" stroke-width="1.65" fill="none"/><path d="M276.45 801.01 L279.6 797.86" stroke="#6a6a6a" stroke-width="3.5" stroke-linecap="round"/><circle cx="276.4" cy="801.06" r="0.8" fill="#edf3fe"/><circle cx="279.65" cy="797.81" r="0.8" fill="#edf3fe"/></svg>
<div class="t" style="left:315.70px;top:792px;font-size:10.5px;color:#111;letter-spacing:-0.321px;-webkit-text-stroke:0.35px;">Market &amp; Sales Strategy</div>
<svg style="left:0;top:0" width="1500" height="857" viewBox="0 0 1500 857"><defs><clipPath id="cc"><rect x="482.6" y="105" width="737.4" height="705.3"/></clipPath></defs><g clip-path="url(#cc)"><path d="M575.60 100.00 L575.60 144.58 Q575.60 146.78 577.80 146.78 L587.00 146.78" fill="none" stroke="#555" stroke-width="1.15"/><path d="M587.70 146.78 L583.50 144.18 L583.50 149.38 Z" fill="#3c3c3c"/><path d="M571.00 119.85 L573.40 119.85 Q575.60 119.85 575.60 121.85 L575.60 123.85" fill="none" stroke="#555" stroke-width="1.15"/><path d="M608.00 146.78 L609.90 146.78 Q611.80 146.78 611.80 148.98 L611.80 154.30 Q611.80 156.50 609.60 156.50 L604.10 156.50 Q601.90 156.50 601.90 158.70 L601.90 171.51 Q601.90 173.71 604.10 173.71 L612.00 173.71" fill="none" stroke="#555" stroke-width="1.15"/><path d="M612.70 173.71 L608.50 171.11 L608.50 176.31 Z" fill="#3c3c3c"/><path d="M633.00 173.71 L635.20 173.71 Q637.40 173.71 637.40 175.91 L637.40 182.10 Q637.40 184.30 635.20 184.30 L628.50 184.30 Q626.30 184.30 626.30 186.50 L626.30 198.44 Q626.30 200.64 628.50 200.64 L636.00 200.64" fill="none" stroke="#555" stroke-width="1.15"/><path d="M636.80 200.64 L632.60 198.04 L632.60 203.24 Z" fill="#3c3c3c"/><path d="M650.70 200.64 L652.85 200.64 Q655.00 200.64 655.00 202.64 L655.00 204.64" fill="none" stroke="#555" stroke-width="1.15"/><path d="M655.00 100.00 L655.00 207.80 Q655.00 210.00 652.80 210.00 L647.50 210.00 Q645.30 210.00 645.30 212.20 L645.30 306.16 Q645.30 308.36 647.50 308.36 L655.00 308.36" fill="none" stroke="#555" stroke-width="1.15"/><path d="M656.00 308.36 L651.80 305.76 L651.80 310.96 Z" fill="#3c3c3c"/><path d="M645.30 227.57 L655.00 227.57" fill="none" stroke="#555" stroke-width="1.15"/><path d="M656.00 227.57 L651.80 224.97 L651.80 230.17 Z" fill="#3c3c3c"/><path d="M645.30 254.50 L655.00 254.50" fill="none" stroke="#555" stroke-width="1.15"/><path d="M656.00 254.50 L651.80 251.90 L651.80 257.10 Z" fill="#3c3c3c"/><path d="M645.30 281.43 L655.00 281.43" fill="none" stroke="#555" stroke-width="1.15"/><path d="M656.00 281.43 L651.80 278.83 L651.80 284.03 Z" fill="#3c3c3c"/><path d="M683.40 100.00 L683.40 132.00 Q683.40 134.20 685.60 134.20 L695.80 134.20 Q698.00 134.20 698.00 136.40 L698.00 225.37 Q698.00 227.57 696.00 227.57 L694.00 227.57" fill="none" stroke="#555" stroke-width="1.15"/><path d="M707.70 100.00 L707.70 178.80 Q707.70 181.00 709.90 181.00 L721.10 181.00 Q723.30 181.00 723.30 183.20 L723.30 279.23 Q723.30 281.43 721.10 281.43 L718.50 281.43" fill="none" stroke="#555" stroke-width="1.15"/><path d="M788.50 100.00 L788.50 216.60 Q788.50 218.80 786.30 218.80 L776.60 218.80 Q774.40 218.80 774.40 221.00 L774.40 500.40 Q774.40 502.60 776.60 502.60 L784.00 502.60" fill="none" stroke="#555" stroke-width="1.15"/><path d="M785.50 502.60 L781.30 500.00 L781.30 505.20 Z" fill="#3c3c3c"/><path d="M699.80 308.36 L702.80 308.36 Q705.00 308.36 705.35 310.53 L705.45 311.19 Q705.80 313.36 705.80 315.56 L705.80 441.00 Q705.80 443.20 708.00 443.20 L716.00 443.20" fill="none" stroke="#555" stroke-width="1.15"/><path d="M717.00 443.20 L712.80 440.60 L712.80 445.80 Z" fill="#3c3c3c"/><path d="M705.80 335.29 L716.00 335.29" fill="none" stroke="#555" stroke-width="1.15"/><path d="M717.00 335.29 L712.80 332.69 L712.80 337.89 Z" fill="#3c3c3c"/><path d="M705.80 367.90 L716.00 367.90" fill="none" stroke="#555" stroke-width="1.15"/><path d="M717.00 367.90 L712.80 365.30 L712.80 370.50 Z" fill="#3c3c3c"/><path d="M705.80 405.50 L716.00 405.50" fill="none" stroke="#555" stroke-width="1.15"/><path d="M717.00 405.50 L712.80 402.90 L712.80 408.10 Z" fill="#3c3c3c"/><path d="M762.10 443.20 L765.50 443.20 Q767.70 443.20 767.70 445.40 L767.70 473.35 Q767.70 475.55 769.90 475.55 L779.00 475.55" fill="none" stroke="#555" stroke-width="1.15"/><path d="M780.20 475.55 L776.00 472.95 L776.00 478.15 Z" fill="#3c3c3c"/><path d="M1043.00 501.50 L1045.10 501.50 Q1047.20 501.50 1047.20 503.70 L1047.20 751.40 Q1047.20 753.60 1045.00 753.60 L1034.90 753.60 Q1032.70 753.60 1032.70 755.80 L1032.70 820.00" fill="none" stroke="#555" stroke-width="1.15"/><path d="M840.00 529.41 L833.60 529.41 Q830.60 529.41 830.60 532.41 L830.60 575.70 Q830.60 578.70 832.25 578.70 L832.25 578.70 Q833.90 578.70 833.90 581.70 L833.90 661.06 Q833.90 664.06 836.90 664.06 L845.00 664.06" fill="none" stroke="#555" stroke-width="1.15"/><path d="M841.20 529.41 L837.00 526.81 L837.00 532.01 Z" fill="#3c3c3c"/><path d="M846.00 664.06 L841.80 661.46 L841.80 666.66 Z" fill="#3c3c3c"/><path d="M829.30 637.13 L831.70 637.13 Q833.90 637.13 833.90 639.13 L833.90 641.13" fill="none" stroke="#555" stroke-width="1.15"/><path d="M908.00 556.34 L901.30 556.34 Q899.10 556.34 899.10 558.54 L899.10 630.80 Q899.10 633.00 901.30 633.00 L911.00 633.00 Q913.20 633.00 913.20 635.20 L913.20 725.80 Q913.20 728.00 911.00 728.00 L906.20 728.00 Q904.00 728.00 904.00 730.20 L904.00 820.00" fill="none" stroke="#555" stroke-width="1.15"/><path d="M909.50 556.34 L905.30 553.74 L905.30 558.94 Z" fill="#3c3c3c"/><path d="M904.00 744.85 L913.00 744.85" fill="none" stroke="#555" stroke-width="1.15"/><path d="M914.00 744.85 L909.80 742.25 L909.80 747.45 Z" fill="#3c3c3c"/><path d="M904.00 771.78 L913.00 771.78" fill="none" stroke="#555" stroke-width="1.15"/><path d="M914.00 771.78 L909.80 769.18 L909.80 774.38 Z" fill="#3c3c3c"/><path d="M904.00 798.71 L913.00 798.71" fill="none" stroke="#555" stroke-width="1.15"/><path d="M914.00 798.71 L909.80 796.11 L909.80 801.31 Z" fill="#3c3c3c"/><path d="M909.30 717.92 L911.25 717.92 Q913.20 717.92 913.20 719.92 L913.20 721.92" fill="none" stroke="#555" stroke-width="1.15"/><path d="M951.00 583.27 L944.00 583.27 Q941.80 583.27 941.80 585.47 L941.80 658.20 Q941.80 660.40 944.00 660.40 L954.10 660.40 Q956.30 660.40 956.30 662.60 L956.30 742.65 Q956.30 744.85 954.15 744.85 L952.00 744.85" fill="none" stroke="#555" stroke-width="1.15"/><path d="M952.20 583.27 L948.00 580.67 L948.00 585.87 Z" fill="#3c3c3c"/><path d="M975.00 610.20 L968.20 610.20 Q966.00 610.20 966.00 612.40 L966.00 698.80 Q966.00 701.00 968.20 701.00 L979.60 701.00 Q981.80 701.00 981.80 703.20 L981.80 796.51 Q981.80 798.71 979.60 798.71 L977.30 798.71" fill="none" stroke="#555" stroke-width="1.15"/><path d="M976.60 610.20 L972.40 607.60 L972.40 612.80 Z" fill="#3c3c3c"/><path d="M866.00 664.06 L868.30 664.06 Q870.50 664.06 870.50 666.26 L870.50 671.80 Q870.50 674.00 868.30 674.00 L862.50 674.00 Q860.30 674.00 860.30 676.20 L860.30 688.79 Q860.30 690.99 862.50 690.99 L870.00 690.99" fill="none" stroke="#555" stroke-width="1.15"/><path d="M871.00 690.99 L866.80 688.39 L866.80 693.59 Z" fill="#3c3c3c"/><path d="M891.20 690.99 L893.10 690.99 Q895.00 690.99 895.00 693.19 L895.00 698.80 Q895.00 701.00 892.80 701.00 L886.60 701.00 Q884.40 701.00 884.40 703.20 L884.40 715.72 Q884.40 717.92 886.60 717.92 L894.00 717.92" fill="none" stroke="#555" stroke-width="1.15"/><path d="M895.00 717.92 L890.80 715.32 L890.80 720.52 Z" fill="#3c3c3c"/><rect x="526.50" y="115.60" width="44.50" height="8.5" fill="#0260c0"/><rect x="529.30" y="115.60" width="1" height="8.5" fill="#2a7ad0" opacity="0.75"/><rect x="567.10" y="115.60" width="1" height="8.5" fill="#2a7ad0" opacity="0.75"/><rect x="587.70" y="142.53" width="20.30" height="8.5" fill="#0260c0"/><rect x="590.50" y="142.53" width="1" height="8.5" fill="#2a7ad0" opacity="0.75"/><rect x="604.10" y="142.53" width="1" height="8.5" fill="#2a7ad0" opacity="0.75"/><rect x="612.70" y="169.46" width="20.30" height="8.5" fill="#0260c0"/><rect x="615.50" y="169.46" width="1" height="8.5" fill="#2a7ad0" opacity="0.75"/><rect x="629.10" y="169.46" width="1" height="8.5" fill="#2a7ad0" opacity="0.75"/><rect x="636.80" y="196.39" width="13.90" height="8.5" fill="#0260c0"/><rect x="639.60" y="196.39" width="1" height="8.5" fill="#2a7ad0" opacity="0.75"/><rect x="646.80" y="196.39" width="1" height="8.5" fill="#2a7ad0" opacity="0.75"/><rect x="656.00" y="223.32" width="38.00" height="8.5" fill="#0260c0"/><rect x="658.80" y="223.32" width="1" height="8.5" fill="#2a7ad0" opacity="0.75"/><rect x="690.10" y="223.32" width="1" height="8.5" fill="#2a7ad0" opacity="0.75"/><rect x="656.00" y="250.25" width="106.00" height="8.5" fill="#0260c0"/><rect x="658.80" y="250.25" width="1" height="8.5" fill="#2a7ad0" opacity="0.75"/><rect x="758.10" y="250.25" width="1" height="8.5" fill="#2a7ad0" opacity="0.75"/><rect x="656.00" y="277.18" width="62.50" height="8.5" fill="#0260c0"/><rect x="658.80" y="277.18" width="1" height="8.5" fill="#2a7ad0" opacity="0.75"/><rect x="714.60" y="277.18" width="1" height="8.5" fill="#2a7ad0" opacity="0.75"/><rect x="656.00" y="304.11" width="43.80" height="8.5" fill="#0260c0"/><rect x="658.80" y="304.11" width="1" height="8.5" fill="#2a7ad0" opacity="0.75"/><rect x="695.90" y="304.11" width="1" height="8.5" fill="#2a7ad0" opacity="0.75"/><rect x="717.00" y="331.04" width="26.40" height="8.5" fill="#0260c0"/><rect x="719.80" y="331.04" width="1" height="8.5" fill="#2a7ad0" opacity="0.75"/><rect x="739.50" y="331.04" width="1" height="8.5" fill="#2a7ad0" opacity="0.75"/><rect x="717.00" y="363.65" width="45.10" height="8.5" fill="#0260c0"/><rect x="719.80" y="363.65" width="1" height="8.5" fill="#2a7ad0" opacity="0.75"/><rect x="758.20" y="363.65" width="1" height="8.5" fill="#2a7ad0" opacity="0.75"/><rect x="717.00" y="401.25" width="45.10" height="8.5" fill="#0260c0"/><rect x="719.80" y="401.25" width="1" height="8.5" fill="#2a7ad0" opacity="0.75"/><rect x="758.20" y="401.25" width="1" height="8.5" fill="#2a7ad0" opacity="0.75"/><rect x="717.00" y="438.95" width="45.10" height="8.5" fill="#0260c0"/><rect x="719.80" y="438.95" width="1" height="8.5" fill="#2a7ad0" opacity="0.75"/><rect x="758.20" y="438.95" width="1" height="8.5" fill="#2a7ad0" opacity="0.75"/><rect x="784.50" y="632.88" width="44.80" height="8.5" fill="#0260c0"/><rect x="787.30" y="632.88" width="1" height="8.5" fill="#2a7ad0" opacity="0.75"/><rect x="825.40" y="632.88" width="1" height="8.5" fill="#2a7ad0" opacity="0.75"/><rect x="846.00" y="659.81" width="20.00" height="8.5" fill="#0260c0"/><rect x="848.80" y="659.81" width="1" height="8.5" fill="#2a7ad0" opacity="0.75"/><rect x="862.10" y="659.81" width="1" height="8.5" fill="#2a7ad0" opacity="0.75"/><rect x="871.00" y="686.74" width="20.20" height="8.5" fill="#0260c0"/><rect x="873.80" y="686.74" width="1" height="8.5" fill="#2a7ad0" opacity="0.75"/><rect x="887.30" y="686.74" width="1" height="8.5" fill="#2a7ad0" opacity="0.75"/><rect x="895.00" y="713.67" width="14.30" height="8.5" fill="#0260c0"/><rect x="897.80" y="713.67" width="1" height="8.5" fill="#2a7ad0" opacity="0.75"/><rect x="905.40" y="713.67" width="1" height="8.5" fill="#2a7ad0" opacity="0.75"/><rect x="914.00" y="740.60" width="38.00" height="8.5" fill="#0260c0"/><rect x="916.80" y="740.60" width="1" height="8.5" fill="#2a7ad0" opacity="0.75"/><rect x="948.10" y="740.60" width="1" height="8.5" fill="#2a7ad0" opacity="0.75"/><rect x="914.00" y="767.53" width="106.30" height="8.5" fill="#0260c0"/><rect x="916.80" y="767.53" width="1" height="8.5" fill="#2a7ad0" opacity="0.75"/><rect x="1016.40" y="767.53" width="1" height="8.5" fill="#2a7ad0" opacity="0.75"/><rect x="914.00" y="794.46" width="63.30" height="8.5" fill="#0260c0"/><rect x="916.80" y="794.46" width="1" height="8.5" fill="#2a7ad0" opacity="0.75"/><rect x="973.40" y="794.46" width="1" height="8.5" fill="#2a7ad0" opacity="0.75"/><path d="M784.8 498 H1043 V505.8 L1040.2 503.2 H787.6 L784.8 505.8 Z" fill="#0260c0"/><path d="M784.80 471.15 l4.4 4.4 l-4.4 4.4 l-4.4 -4.4 Z" fill="#fb8d10"/><path d="M845.60 525.01 l4.4 4.4 l-4.4 4.4 l-4.4 -4.4 Z" fill="#fb8d10"/><path d="M913.90 551.94 l4.4 4.4 l-4.4 4.4 l-4.4 -4.4 Z" fill="#fb8d10"/><path d="M956.50 578.87 l4.4 4.4 l-4.4 4.4 l-4.4 -4.4 Z" fill="#fb8d10"/><path d="M981.00 605.80 l4.4 4.4 l-4.4 4.4 l-4.4 -4.4 Z" fill="#fb8d10"/></g></svg>
<div class="t" style="left:580.00px;top:114px;font-size:10.5px;color:#111;letter-spacing:-0.294px;-webkit-text-stroke:0.35px;">Ross Kline; Donna Ledbetter; Chris Lee</div>
<div class="t" style="left:617.00px;top:141px;font-size:10.5px;color:#111;letter-spacing:-0.310px;-webkit-text-stroke:0.35px;">Olivia Norman; Chris Lee</div>
<div class="t" style="left:642.00px;top:168px;font-size:10.5px;color:#111;letter-spacing:-0.346px;-webkit-text-stroke:0.35px;">Chris Lee</div>
<div class="t" style="left:660.00px;top:195px;font-size:10.5px;color:#111;letter-spacing:-0.310px;-webkit-text-stroke:0.35px;">Chris Lee; Olivia Norman</div>
<div class="t" style="left:703.00px;top:222px;font-size:10.5px;color:#111;letter-spacing:-0.361px;-webkit-text-stroke:0.35px;">Olivia Norman</div>
<div class="t" style="left:771.00px;top:249px;font-size:10.5px;color:#111;letter-spacing:-0.361px;-webkit-text-stroke:0.35px;">Paige Jones</div>
<div class="t" style="left:729.00px;top:275px;font-size:10.5px;color:#111;letter-spacing:-0.441px;-webkit-text-stroke:0.35px;">Ross Kline</div>
<div class="t" style="left:710.00px;top:302px;font-size:10.5px;color:#111;letter-spacing:-0.346px;-webkit-text-stroke:0.35px;">Chris Lee</div>
<div class="t" style="left:752.50px;top:329px;font-size:10.5px;color:#111;letter-spacing:-0.331px;-webkit-text-stroke:0.35px;">Chris Lee; Olivia Norman</div>
<div class="t" style="left:771.50px;top:362px;font-size:10.5px;color:#111;letter-spacing:-0.265px;-webkit-text-stroke:0.35px;">Paige Jones; Computers [ 1 ]; Office Furniture [ 1 ]; Toner Cartridges [ 2 ]</div>
<div class="t" style="left:771.50px;top:400px;font-size:10.5px;color:#111;letter-spacing:-0.273px;-webkit-text-stroke:0.35px;">Gabriella  James; Computers [ 1 ]; Office Furniture [ 1 ]; Toner Cartridges [ 1 ]</div>
<div class="t" style="left:771.50px;top:437px;font-size:10.5px;color:#111;letter-spacing:-0.271px;-webkit-text-stroke:0.35px;">Drew Wheeler; Computers [ 1 ]; Office Furniture [ 1 ]; Toner Cartridges [ 1 ]</div>
<div class="t" style="left:798.70px;top:470px;font-size:10.5px;color:#111;letter-spacing:-0.344px;-webkit-text-stroke:0.35px;">8/3/18</div>
<div class="t" style="left:859.50px;top:523px;font-size:10.5px;color:#111;letter-spacing:-0.337px;-webkit-text-stroke:0.35px;">8/13/18; Ed Arnold</div>
<div class="t" style="left:927.50px;top:550px;font-size:10.5px;color:#111;letter-spacing:-0.280px;-webkit-text-stroke:0.35px;">8/24/18; Ed Arnold</div>
<div class="t" style="left:970.00px;top:577px;font-size:10.5px;color:#111;letter-spacing:-0.308px;-webkit-text-stroke:0.35px;">8/31/18; Ed Arnold</div>
<div class="t" style="left:994.50px;top:604px;font-size:10.5px;color:#111;letter-spacing:-0.307px;-webkit-text-stroke:0.35px;">9/4/18; Ed Arnold</div>
<div class="t" style="left:839.00px;top:631px;font-size:10.5px;color:#111;letter-spacing:-0.321px;-webkit-text-stroke:0.35px;">Jack Grabowski; Chris Lee</div>
<div class="t" style="left:875.50px;top:658px;font-size:10.5px;color:#111;letter-spacing:-0.334px;-webkit-text-stroke:0.35px;">Sue Tomkins; Chris Lee</div>
<div class="t" style="left:900.50px;top:685px;font-size:10.5px;color:#111;letter-spacing:-0.306px;-webkit-text-stroke:0.35px;">Eleanor Winter; Sue Tomkins; Chris Lee</div>
<div class="t" style="left:918.50px;top:712px;font-size:10.5px;color:#111;letter-spacing:-0.300px;-webkit-text-stroke:0.35px;">Christina Winch; Sue Tomkins; Chris Lee</div>
<div class="t" style="left:961.50px;top:739px;font-size:10.5px;color:#111;letter-spacing:-0.327px;-webkit-text-stroke:0.35px;">Jan Witting</div>
<div class="t" style="left:1030.00px;top:766px;font-size:10.5px;color:#111;letter-spacing:-0.312px;-webkit-text-stroke:0.35px;">Christina Winch</div>
<div class="t" style="left:986.50px;top:793px;font-size:10.5px;color:#111;letter-spacing:-0.341px;-webkit-text-stroke:0.35px;">Jack Grabowski</div>
<div class="b" style="left:1220.30px;top:68.50px;width:3.50px;height:788.50px;background:linear-gradient(90deg,#e6e6e6 0,#e3e3e3 70%,#d9d9d9 100%);"></div>
<div class="b" style="left:1224.00px;top:68.30px;width:89.30px;height:26.70px;background:#3a99fc;"></div>
<div class="b" style="left:1313.30px;top:68.30px;width:179.40px;height:26.70px;background:#f5f5f5;border-top:1px solid #e2e2e2;border-bottom:1px solid #e2e2e2;border-right:1px solid #e2e2e2;"></div>
<div class="b" style="left:1402.00px;top:68.30px;width:1.00px;height:26.70px;background:#e0e0e0;"></div>
<div class="t" style="left:1268.50px;width:0;display:flex;justify-content:center;top:74px;font-size:10.8px;color:#fff;letter-spacing:0.312px;-webkit-text-stroke:0.35px;text-shadow:0 0 0.4px #fff;"><span style="flex:none">Task</span></div>
<div class="t" style="left:1358.00px;width:0;display:flex;justify-content:center;top:74px;font-size:10.8px;color:#a09a9c;letter-spacing:0.207px;-webkit-text-stroke:0.35px;"><span style="flex:none">Assignments</span></div>
<div class="t" style="left:1448.30px;width:0;display:flex;justify-content:center;top:74px;font-size:10.8px;color:#a09a9c;letter-spacing:0.331px;-webkit-text-stroke:0.35px;"><span style="flex:none">Links</span></div>
<svg style="left:1225.5px;top:104.10px" width="8" height="7" viewBox="0 0 8 7"><path d="M0.2 0.4 H7.4 L3.8 6.3 Z" fill="#7e7e7e"/></svg>
<div class="t" style="left:1241.70px;top:100px;font-size:10.4px;color:#0c0c0c;font-weight:bold;letter-spacing:0.012px;-webkit-text-stroke:0.15px;">Info</div>
<div class="b" style="left:1224.00px;top:112.30px;width:263.00px;height:0.80px;background:#d4d4d4;"></div>
<div class="t" style="left:1241.70px;top:120px;font-size:10.4px;color:#141414;letter-spacing:-0.229px;-webkit-text-stroke:0.35px;">Name:</div>
<div class="b" style="left:1318.30px;top:118.40px;width:148.40px;height:15.80px;background:#fff;border:1px solid #d6d6d6;border-top-color:#bcbcbc;"></div>
<div class="t" style="left:1321.70px;top:120px;font-size:10.4px;color:#1a1a1a;letter-spacing:0.082px;-webkit-text-stroke:0.35px;">Production</div>
<div class="t" style="left:1241.70px;top:143px;font-size:10.4px;color:#141414;letter-spacing:0.094px;-webkit-text-stroke:0.35px;">Duration:</div>
<div class="b" style="left:1318.30px;top:140.60px;width:60.10px;height:16.00px;background:#fff;border:1px solid #d6d6d6;border-top-color:#bcbcbc;"></div>
<div class="t" style="left:1321.70px;top:143px;font-size:10.4px;color:#1a1a1a;letter-spacing:-0.555px;-webkit-text-stroke:0.35px;">12.0</div>
<div class="b" style="left:1379.90px;top:141.00px;width:8.30px;height:15.00px;background:#fff;border-radius:4px;box-shadow:0 0 0 0.5px rgba(0,0,0,0.2),0 0.5px 1px rgba(0,0,0,0.22);"></div>
<svg style="left:1380.05px;top:141.50px" width="8" height="14" viewBox="0 0 8 14"><path d="M1.6 5.2 L4 2.6 L6.4 5.2 M1.6 8.8 L4 11.4 L6.4 8.8" fill="none" stroke="#3a3a3a" stroke-width="1.05" stroke-linecap="round" stroke-linejoin="round"/></svg>
<div class="b" style="left:1402.50px;top:140.80px;width:63.80px;height:14.70px;background:#fff;border-radius:3.5px;box-shadow:0 0 0 0.5px rgba(0,0,0,0.18),0 0.5px 1.2px rgba(0,0,0,0.3);"></div>
<div class="b" style="left:1453.30px;top:140.80px;width:13.00px;height:14.70px;background:linear-gradient(#4ea6fd,#1475f6);border-radius:0 3.5px 3.5px 0;"></div>
<svg style="left:1455.80px;top:142.15px" width="8" height="12" viewBox="0 0 8 12"><path d="M1.7 4.4 L4 2 L6.3 4.4 M1.7 7.6 L4 10 L6.3 7.6" fill="none" stroke="#fff" stroke-width="1.2" stroke-linecap="round" stroke-linejoin="round"/></svg>
<div class="t" style="left:1409.50px;top:142px;font-size:10.4px;color:#1a1a1a;letter-spacing:-0.113px;-webkit-text-stroke:0.35px;">Day(s)</div>
<div class="t" style="left:1241.70px;top:165px;font-size:10.4px;color:#141414;letter-spacing:0.047px;-webkit-text-stroke:0.35px;">Complete:</div>
<div class="b" style="left:1318.30px;top:163.10px;width:148.40px;height:15.60px;background:#fff;border:1px solid #d6d6d6;border-top-color:#bcbcbc;"></div>
<div class="t" style="left:1321.70px;top:165px;font-size:10.4px;color:#1a1a1a;letter-spacing:-0.488px;-webkit-text-stroke:0.35px;">0 %</div>
<div class="b" style="left:1468.80px;top:163.40px;width:8.00px;height:15.20px;background:#fff;border-radius:4px;box-shadow:0 0 0 0.5px rgba(0,0,0,0.2),0 0.5px 1px rgba(0,0,0,0.22);"></div>
<svg style="left:1468.80px;top:164.00px" width="8" height="14" viewBox="0 0 8 14"><path d="M1.6 5.2 L4 2.6 L6.4 5.2 M1.6 8.8 L4 11.4 L6.4 8.8" fill="none" stroke="#3a3a3a" stroke-width="1.05" stroke-linecap="round" stroke-linejoin="round"/></svg>
<div class="t" style="left:1241.70px;top:188px;font-size:10.4px;color:#141414;letter-spacing:0.159px;-webkit-text-stroke:0.35px;">Priority:</div>
<div class="b" style="left:1318.30px;top:185.50px;width:148.40px;height:15.80px;background:#fff;border:1px solid #d6d6d6;border-top-color:#bcbcbc;"></div>
<svg style="left:0;top:0" width="1500" height="857"><polygon points="1326.40,188.60 1327.58,191.88 1331.06,191.99 1328.30,194.12 1329.28,197.46 1326.40,195.50 1323.52,197.46 1324.50,194.12 1321.74,191.99 1325.22,191.88" fill="#2b2b2b"/></svg>
<svg style="left:0;top:0" width="1500" height="857"><polygon points="1340.60,188.60 1341.78,191.88 1345.26,191.99 1342.50,194.12 1343.48,197.46 1340.60,195.50 1337.72,197.46 1338.70,194.12 1335.94,191.99 1339.42,191.88" fill="#2b2b2b"/></svg>
<svg style="left:0;top:0" width="1500" height="857"><polygon points="1355.20,188.60 1356.38,191.88 1359.86,191.99 1357.10,194.12 1358.08,197.46 1355.20,195.50 1352.32,197.46 1353.30,194.12 1350.54,191.99 1354.02,191.88" fill="#2b2b2b"/></svg>
<svg style="left:0;top:0" width="1500" height="857"><polygon points="1369.50,189.20 1370.62,191.96 1373.59,192.17 1371.31,194.09 1372.03,196.98 1369.50,195.40 1366.97,196.98 1367.69,194.09 1365.41,192.17 1368.38,191.96" fill="#fff" stroke="#707070" stroke-width="1.25" stroke-linejoin="miter"/></svg>
<svg style="left:0;top:0" width="1500" height="857"><polygon points="1383.80,189.20 1384.92,191.96 1387.89,192.17 1385.61,194.09 1386.33,196.98 1383.80,195.40 1381.27,196.98 1381.99,194.09 1379.71,192.17 1382.68,191.96" fill="#fff" stroke="#707070" stroke-width="1.25" stroke-linejoin="miter"/></svg>
<div class="t" style="left:1241.70px;top:209px;font-size:10.4px;color:#141414;letter-spacing:-0.038px;-webkit-text-stroke:0.35px;">Marker:</div>
<div class="b" style="left:1318.50px;top:208.00px;width:147.80px;height:14.80px;background:#fff;border-radius:3.5px;box-shadow:0 0 0 0.5px rgba(0,0,0,0.18),0 0.5px 1.2px rgba(0,0,0,0.3);"></div>
<div class="b" style="left:1453.30px;top:208.00px;width:13.00px;height:14.80px;background:linear-gradient(#4ea6fd,#1475f6);border-radius:0 3.5px 3.5px 0;"></div>
<svg style="left:1455.80px;top:209.40px" width="8" height="12" viewBox="0 0 8 12"><path d="M1.7 4.4 L4 2 L6.3 4.4 M1.7 7.6 L4 10 L6.3 7.6" fill="none" stroke="#fff" stroke-width="1.2" stroke-linecap="round" stroke-linejoin="round"/></svg>
<div class="t" style="left:1325.30px;top:209px;font-size:10.4px;color:#1a1a1a;letter-spacing:-0.040px;-webkit-text-stroke:0.35px;">No Marker</div>
<div class="t" style="left:1241.70px;top:229px;font-size:10.4px;color:#141414;letter-spacing:0.095px;-webkit-text-stroke:0.35px;">Milestone:</div>
<div class="b" style="left:1318.30px;top:229.20px;width:12.10px;height:12.00px;background:#fff;border-radius:3px;box-shadow:0 0 0 0.5px rgba(0,0,0,0.25),0 0.5px 1px rgba(0,0,0,0.2);"></div>
<svg style="left:1225.5px;top:251.20px" width="8" height="7" viewBox="0 0 8 7"><path d="M0.2 0.4 H7.4 L3.8 6.3 Z" fill="#7e7e7e"/></svg>
<div class="t" style="left:1241.70px;top:248px;font-size:10.4px;color:#0c0c0c;font-weight:bold;letter-spacing:-0.146px;-webkit-text-stroke:0.15px;">Cost</div>
<div class="b" style="left:1224.00px;top:259.40px;width:263.00px;height:0.80px;background:#d4d4d4;"></div>
<div class="t" style="left:1241.70px;top:268px;font-size:10.4px;color:#141414;letter-spacing:-0.104px;-webkit-text-stroke:0.35px;">Baseline:</div>
<div class="b" style="left:1318.30px;top:266.30px;width:148.10px;height:15.60px;background:#fff;border:1px solid #d6d6d6;border-top-color:#bcbcbc;"></div>
<div class="t" style="left:1321.70px;top:268px;font-size:10.4px;color:#1a1a1a;letter-spacing:0.106px;-webkit-text-stroke:0.35px;">0.00 $</div>
<div class="b" style="left:1468.60px;top:266.60px;width:8.20px;height:15.00px;background:#fff;border-radius:4px;box-shadow:0 0 0 0.5px rgba(0,0,0,0.2),0 0.5px 1px rgba(0,0,0,0.22);"></div>
<svg style="left:1468.70px;top:267.10px" width="8" height="14" viewBox="0 0 8 14"><path d="M1.6 5.2 L4 2.6 L6.4 5.2 M1.6 8.8 L4 11.4 L6.4 8.8" fill="none" stroke="#3a3a3a" stroke-width="1.05" stroke-linecap="round" stroke-linejoin="round"/></svg>
<div class="t" style="left:1241.70px;top:291px;font-size:10.4px;color:#141414;letter-spacing:0.124px;-webkit-text-stroke:0.35px;">Actual:</div>
<div class="b" style="left:1318.30px;top:288.90px;width:148.10px;height:15.40px;background:#fff;border:1px solid #d6d6d6;border-top-color:#bcbcbc;"></div>
<div class="t" style="left:1321.70px;top:291px;font-size:10.4px;color:#1a1a1a;letter-spacing:-0.092px;-webkit-text-stroke:0.35px;">7,200 $</div>
<svg style="left:1225.5px;top:314.90px" width="8" height="7" viewBox="0 0 8 7"><path d="M0.2 0.4 H7.4 L3.8 6.3 Z" fill="#7e7e7e"/></svg>
<div class="t" style="left:1241.70px;top:311px;font-size:10.4px;color:#0c0c0c;font-weight:bold;letter-spacing:0.017px;-webkit-text-stroke:0.15px;">Date</div>
<div class="b" style="left:1224.00px;top:323.10px;width:263.00px;height:0.80px;background:#d4d4d4;"></div>
<div class="t" style="left:1241.70px;top:332px;font-size:10.4px;color:#141414;letter-spacing:0.154px;-webkit-text-stroke:0.35px;">Start:</div>
<div class="b" style="left:1318.30px;top:330.00px;width:147.70px;height:16.50px;background:#fff;border:1px solid #d6d6d6;border-top-color:#bcbcbc;"></div>
<div class="t" style="left:1325.20px;top:332px;font-size:10.4px;color:#1a1a1a;letter-spacing:0.252px;-webkit-text-stroke:0.35px;">7/13/ 2018,  8:00 AM</div>
<svg style="left:1448.20px;top:331.30px;" width="15" height="14" viewBox="0 0 15 14"><rect x="0.5" y="0.5" width="14" height="13" fill="#fff" stroke="#cfcfcf" stroke-width="0.6"/><rect x="0.5" y="0.3" width="14" height="2.6" fill="#d8433c"/><path d="M4 3 V13.5 M7.5 3 V13.5 M11 3 V13.5 M0.5 6.5 H14.5 M0.5 10 H14.5" stroke="#d9d9d9" stroke-width="0.6"/><rect x="8.3" y="4.6" width="3" height="3" fill="#2f8ef0"/></svg>
<div class="b" style="left:1468.60px;top:330.60px;width:8.20px;height:15.40px;background:#fff;border-radius:4px;box-shadow:0 0 0 0.5px rgba(0,0,0,0.2),0 0.5px 1px rgba(0,0,0,0.22);"></div>
<svg style="left:1468.70px;top:331.30px" width="8" height="14" viewBox="0 0 8 14"><path d="M1.6 5.2 L4 2.6 L6.4 5.2 M1.6 8.8 L4 11.4 L6.4 8.8" fill="none" stroke="#3a3a3a" stroke-width="1.05" stroke-linecap="round" stroke-linejoin="round"/></svg>
<div class="t" style="left:1241.70px;top:356px;font-size:10.4px;color:#141414;letter-spacing:-0.051px;-webkit-text-stroke:0.35px;">Finish:</div>
<div class="b" style="left:1318.30px;top:353.40px;width:147.70px;height:16.40px;background:#fff;border:1px solid #d6d6d6;border-top-color:#bcbcbc;"></div>
<div class="t" style="left:1325.20px;top:356px;font-size:10.4px;color:#1a1a1a;letter-spacing:0.223px;-webkit-text-stroke:0.35px;">7/30/ 2018,  5:00 PM</div>
<svg style="left:1448.20px;top:354.70px;" width="15" height="14" viewBox="0 0 15 14"><rect x="0.5" y="0.5" width="14" height="13" fill="#fff" stroke="#cfcfcf" stroke-width="0.6"/><rect x="0.5" y="0.3" width="14" height="2.6" fill="#d8433c"/><path d="M4 3 V13.5 M7.5 3 V13.5 M11 3 V13.5 M0.5 6.5 H14.5 M0.5 10 H14.5" stroke="#d9d9d9" stroke-width="0.6"/><rect x="8.3" y="4.6" width="3" height="3" fill="#2f8ef0"/></svg>
<div class="b" style="left:1468.60px;top:354.00px;width:8.20px;height:15.40px;background:#fff;border-radius:4px;box-shadow:0 0 0 0.5px rgba(0,0,0,0.2),0 0.5px 1px rgba(0,0,0,0.22);"></div>
<svg style="left:1468.70px;top:354.70px" width="8" height="14" viewBox="0 0 8 14"><path d="M1.6 5.2 L4 2.6 L6.4 5.2 M1.6 8.8 L4 11.4 L6.4 8.8" fill="none" stroke="#3a3a3a" stroke-width="1.05" stroke-linecap="round" stroke-linejoin="round"/></svg>
<div class="t" style="left:1241.70px;top:379px;font-size:10.4px;color:#141414;letter-spacing:-0.028px;-webkit-text-stroke:0.35px;">Deadline:</div>
<div class="b" style="left:1318.30px;top:379.00px;width:12.10px;height:12.20px;background:#fff;border-radius:3px;box-shadow:0 0 0 0.5px rgba(0,0,0,0.25),0 0.5px 1px rgba(0,0,0,0.2);"></div>
<div class="b" style="left:1331.80px;top:377.20px;width:134.20px;height:16.20px;background:#fff;border:1px solid #d6d6d6;border-top-color:#bcbcbc;"></div>
<div class="t" style="left:1338.10px;top:379px;font-size:10.4px;color:#1a1a1a;letter-spacing:0.126px;-webkit-text-stroke:0.35px;">4/18/ 2018, 12:19 PM</div>
<svg style="left:1448.20px;top:378.30px;opacity:0.4;" width="15" height="14" viewBox="0 0 15 14"><rect x="0.5" y="0.5" width="14" height="13" fill="#fff" stroke="#cfcfcf" stroke-width="0.6"/><rect x="0.5" y="0.3" width="14" height="2.6" fill="#d8433c"/><path d="M4 3 V13.5 M7.5 3 V13.5 M11 3 V13.5 M0.5 6.5 H14.5 M0.5 10 H14.5" stroke="#d9d9d9" stroke-width="0.6"/><rect x="8.3" y="4.6" width="3" height="3" fill="#2f8ef0"/></svg>
<div class="b" style="left:1468.60px;top:377.80px;width:8.20px;height:15.20px;background:#fff;border-radius:4px;box-shadow:0 0 0 0.5px rgba(0,0,0,0.2),0 0.5px 1px rgba(0,0,0,0.22);opacity:0.45;"></div>
<svg style="left:1468.70px;top:378.40px;opacity:0.45" width="8" height="14" viewBox="0 0 8 14"><path d="M1.6 5.2 L4 2.6 L6.4 5.2 M1.6 8.8 L4 11.4 L6.4 8.8" fill="none" stroke="#3a3a3a" stroke-width="1.05" stroke-linecap="round" stroke-linejoin="round"/></svg>
<svg style="left:1225.5px;top:404.20px" width="8" height="7" viewBox="0 0 8 7"><path d="M0.2 0.4 H7.4 L3.8 6.3 Z" fill="#7e7e7e"/></svg>
<div class="t" style="left:1241.70px;top:401px;font-size:10.4px;color:#0c0c0c;font-weight:bold;letter-spacing:-0.089px;-webkit-text-stroke:0.15px;">Scheduling</div>
<div class="b" style="left:1224.00px;top:412.40px;width:263.00px;height:0.80px;background:#d4d4d4;"></div>
<div class="t" style="left:1241.70px;top:421px;font-size:10.4px;color:#141414;letter-spacing:0.059px;-webkit-text-stroke:0.35px;">Type:</div>
<div class="b" style="left:1318.50px;top:419.00px;width:147.80px;height:14.80px;background:#fff;border-radius:3.5px;box-shadow:0 0 0 0.5px rgba(0,0,0,0.18),0 0.5px 1.2px rgba(0,0,0,0.3);"></div>
<div class="b" style="left:1453.30px;top:419.00px;width:13.00px;height:14.80px;background:linear-gradient(#4ea6fd,#1475f6);border-radius:0 3.5px 3.5px 0;"></div>
<svg style="left:1455.80px;top:420.40px" width="8" height="12" viewBox="0 0 8 12"><path d="M1.7 4.4 L4 2 L6.3 4.4 M1.7 7.6 L4 10 L6.3 7.6" fill="none" stroke="#fff" stroke-width="1.2" stroke-linecap="round" stroke-linejoin="round"/></svg>
<div class="t" style="left:1325.20px;top:420px;font-size:10.4px;color:#1a1a1a;letter-spacing:-0.011px;-webkit-text-stroke:0.35px;">Fixed Units</div>
<div class="t" style="left:1241.70px;top:440px;font-size:10.4px;color:#141414;letter-spacing:0.210px;-webkit-text-stroke:0.35px;">Effort driven:</div>
<div class="b" style="left:1318.30px;top:440.00px;width:12.10px;height:12.20px;background:#fff;border-radius:3px;box-shadow:0 0 0 0.5px rgba(0,0,0,0.25),0 0.5px 1px rgba(0,0,0,0.2);"></div>
<div class="b" style="left:242.90px;top:819.20px;width:976.70px;height:18.40px;background:linear-gradient(#d9d9d9,#dedede);border-top:1px solid #c8c8c8;"></div>
<div class="b" style="left:242.90px;top:819.50px;width:118.90px;height:18.30px;background:#b4b4b4;border-radius:0 0 5px 5px;"></div>
<div class="t" style="left:248.70px;top:823px;font-size:10px;color:#1c1c1c;letter-spacing:0.255px;-webkit-text-stroke:0.35px;">New Product Schedule</div>
<div class="b" style="left:232.50px;top:837.80px;width:990.50px;height:19.20px;background:linear-gradient(#f1f1f1,#e6e6e6);"></div>
<div class="b" style="left:245.20px;top:838.20px;width:59.00px;height:19.80px;background:#fcfcfc;border:1px solid #c9c9c9;"></div>
<div class="b" style="left:263.10px;top:838.40px;width:0.80px;height:18.60px;background:#d2d2d2;"></div>
<div class="b" style="left:281.00px;top:838.40px;width:0.80px;height:18.60px;background:#d2d2d2;"></div>
<svg style="left:0;top:0" width="1500" height="857"><path d="M249.5 847.6 H259.3 M254.4 842.7 V852.5 M267.3 847.6 H277.2" stroke="#3a3a3a" stroke-width="1" fill="none"/><g transform="translate(289.4 847.3)"><circle r="3.1" fill="none" stroke="#5a5a5a" stroke-width="1.7"/><g stroke="#5a5a5a" stroke-width="1.7"><path d="M0 -3.4 V-5.2" transform="rotate(0)"/><path d="M0 -3.4 V-5.2" transform="rotate(45)"/><path d="M0 -3.4 V-5.2" transform="rotate(90)"/><path d="M0 -3.4 V-5.2" transform="rotate(135)"/><path d="M0 -3.4 V-5.2" transform="rotate(180)"/><path d="M0 -3.4 V-5.2" transform="rotate(225)"/><path d="M0 -3.4 V-5.2" transform="rotate(270)"/><path d="M0 -3.4 V-5.2" transform="rotate(315)"/></g></g><path d="M296.5 846.6 H300.7 L298.6 849 Z" fill="#444"/></svg>
<div class="t" style="left:373.00px;top:842px;font-size:10.3px;color:#1a1a1a;letter-spacing:0.125px;-webkit-text-stroke:0.35px;">Budget: 0 $</div>
<div class="t" style="left:575.90px;top:842px;font-size:10.3px;color:#1a1a1a;letter-spacing:0.113px;-webkit-text-stroke:0.35px;">Actual Cost: 195,279.95 $</div>
<div class="t" style="left:783.40px;top:842px;font-size:10.3px;color:#e8392c;letter-spacing:0.179px;-webkit-text-stroke:0.35px;">Profit: -195,279.95 $</div>
<div class="t" style="left:1020.00px;top:839px;font-size:8.9px;color:#222;letter-spacing:0.145px;-webkit-text-stroke:0.1px;">Mo - w</div>
<svg style="left:1062.2px;top:840px" width="10" height="15" viewBox="0 0 10 15"><path d="M2 5.6 L5 2.4 L8 5.6 M2 9.4 L5 12.6 L8 9.4" fill="none" stroke="#3a3a3a" stroke-width="1.1" stroke-linecap="round" stroke-linejoin="round"/></svg>
<div class="b" style="left:1076.60px;top:846.30px;width:138.10px;height:2.40px;background:#bdbdbd;border-radius:1.2px;"></div>
<div class="b" style="left:1076.60px;top:846.30px;width:51.40px;height:2.40px;background:#3b93f7;border-radius:1.2px;"></div>
<div class="b" style="left:1123.40px;top:841.20px;width:12.80px;height:12.80px;background:#fff;border-radius:50%;box-shadow:0 0 0 0.5px rgba(0,0,0,0.2),0 0.6px 1.5px rgba(0,0,0,0.35);"></div>
</div></body></html>
